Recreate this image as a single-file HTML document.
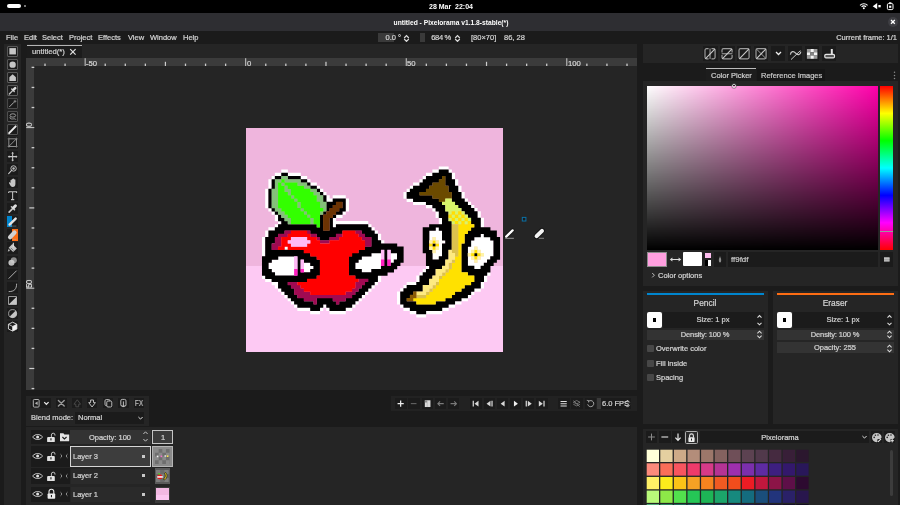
<!DOCTYPE html>
<html><head><meta charset="utf-8"><title>Pixelorama</title><style>
html,body{margin:0;padding:0}
body{width:900px;height:505px;overflow:hidden;background:#1b1b1b;position:relative;font-family:"Liberation Sans",sans-serif}
.b{position:absolute;display:block}
.t{position:absolute;white-space:nowrap;font-family:"Liberation Sans",sans-serif;will-change:transform;-webkit-text-stroke:0.22px}
.art{display:block}
</style></head><body>
<div class="b " style="left:0px;top:0px;width:900px;height:13.3px;background:#000;"></div>
<div class="b " style="left:0px;top:13.2px;width:900px;height:17.4px;background:#2e2e32;"></div>
<div class="b " style="left:0px;top:30.6px;width:900px;height:13.4px;background:#1b1b1b;"></div>
<div class="b " style="left:6.9px;top:4.2px;width:14px;height:3.6px;background:#fff;border-radius:2px"></div>
<div class="b " style="left:23.6px;top:5px;width:2px;height:2px;background:#9a9a9a;border-radius:1px"></div>
<div class="t" style="top:1.9px;font-size:7px;line-height:9.8px;color:#fff;font-weight:bold;-webkit-text-stroke:0;left:300.9px;width:300px;text-align:center;">28 Mar&nbsp;&nbsp;22:04</div>
<div class="t" style="top:17.91px;font-size:6.7px;line-height:9.38px;color:#fff;font-weight:bold;-webkit-text-stroke:0;left:300.6px;width:300px;text-align:center;">untitled - Pixelorama v1.1.8-stable(*)</div>
<svg class="b" style="left:856px;top:0px;" width="44" height="13" viewBox="0 0 44 13"><g fill="none" stroke="#fff" stroke-width="1.150"><path d="M4.050 5.300A5.300 5.300 0 0111.550 5.300M5.600 6.850A3.100 3.100 0 0110 6.850"/></g><circle cx="7.800" cy="8.300" r="1" fill="#fff"/><path d="M16.700 6.150L21.200 3v6.300z" fill="#fff"/><rect x="22.400" y="5" width="2.300" height="2.300" fill="#fff"/><rect x="31.400" y="3.600" width="5.600" height="6" rx="1.100" fill="none" stroke="#fff" stroke-width="1"/><rect x="33" y="2.300" width="2.400" height="1.300" fill="#fff"/><rect x="33.100" y="5.700" width="2.200" height="2.100" fill="#fff"/></svg>
<div class="b " style="left:888.1px;top:17.1px;width:9.8px;height:9.8px;background:#3e3e43;border-radius:50%"></div>
<svg class="b" style="left:888.1px;top:17.1px;" width="9.8" height="9.8" viewBox="0 0 9.8 9.8"><path d="M3 3l3.800 3.800M6.800 3L3 6.800" stroke="#fff" stroke-width="1.300" fill="none"/></svg>
<div class="t" style="top:33.15px;font-size:7.5px;line-height:10.5px;color:#d2d2d2;left:5.7px;">File</div>
<div class="t" style="top:33.15px;font-size:7.5px;line-height:10.5px;color:#d2d2d2;left:23.6px;">Edit</div>
<div class="t" style="top:33.15px;font-size:7.5px;line-height:10.5px;color:#d2d2d2;left:42.1px;">Select</div>
<div class="t" style="top:33.15px;font-size:7.5px;line-height:10.5px;color:#d2d2d2;left:68.7px;">Project</div>
<div class="t" style="top:33.15px;font-size:7.5px;line-height:10.5px;color:#d2d2d2;left:98.2px;">Effects</div>
<div class="t" style="top:33.15px;font-size:7.5px;line-height:10.5px;color:#d2d2d2;left:127.6px;">View</div>
<div class="t" style="top:33.15px;font-size:7.5px;line-height:10.5px;color:#d2d2d2;left:149.8px;">Window</div>
<div class="t" style="top:33.15px;font-size:7.5px;line-height:10.5px;color:#d2d2d2;left:182.5px;">Help</div>
<div class="b " style="left:377.5px;top:33px;width:16.5px;height:9.2px;background:#3a3a3a;"></div>
<div class="t" style="top:33.15px;font-size:7.5px;line-height:10.5px;color:#d2d2d2;left:100.8px;width:300px;text-align:right;">0.0 °</div>
<svg class="b" style="left:402.5px;top:33.5px;" width="7" height="8.5" viewBox="0 0 7 8.5"><path d="M1.200 4L3.500 1.600 5.800 4M1.200 5L3.500 7.400 5.800 5" fill="none" stroke="#dedede" stroke-width="1.150"/></svg>
<div class="b " style="left:419.8px;top:33px;width:5.2px;height:9.2px;background:#3a3a3a;"></div>
<div class="t" style="top:33.15px;font-size:7.5px;line-height:10.5px;color:#d2d2d2;left:150.6px;width:300px;text-align:right;letter-spacing:-0.3px;">684 %</div>
<svg class="b" style="left:454px;top:33.5px;" width="7" height="8.5" viewBox="0 0 7 8.5"><path d="M1.200 4L3.500 1.600 5.800 4M1.200 5L3.500 7.400 5.800 5" fill="none" stroke="#dedede" stroke-width="1.150"/></svg>
<div class="t" style="top:33.15px;font-size:7.5px;line-height:10.5px;color:#d2d2d2;left:471.2px;">[80×70]</div>
<div class="t" style="top:33.15px;font-size:7.5px;line-height:10.5px;color:#d2d2d2;left:503.6px;">86, 28</div>
<div class="t" style="top:33.15px;font-size:7.5px;line-height:10.5px;color:#d2d2d2;left:597.2px;width:300px;text-align:right;">Current frame: 1/1</div>
<div class="b " style="left:4.4px;top:44px;width:16.8px;height:461px;background:#252525;"></div>
<div class="b " style="left:6.7px;top:45.6px;width:11.25px;height:11.25px;background:#1b1b1b;"></div>
<svg class="b" style="left:6.7px;top:45.6px;" width="11.25" height="11.25" viewBox="0 0 24 24"><rect x="1.6" y="1.6" width="20.8" height="20.8" fill="none" stroke="#8c8c8c" stroke-width="1.250"/><rect x="5" y="4.5" width="14" height="13.5" fill="#c6c6c6"/></svg>
<div class="b " style="left:6.7px;top:58.725px;width:11.25px;height:11.25px;background:#1b1b1b;"></div>
<svg class="b" style="left:6.7px;top:58.725px;" width="11.25" height="11.25" viewBox="0 0 24 24"><rect x="1.6" y="1.6" width="20.8" height="20.8" fill="none" stroke="#8c8c8c" stroke-width="1.250"/><circle cx="12" cy="12" r="6.8" fill="#c6c6c6"/></svg>
<div class="b " style="left:6.7px;top:71.85px;width:11.25px;height:11.25px;background:#1b1b1b;"></div>
<svg class="b" style="left:6.7px;top:71.85px;" width="11.25" height="11.25" viewBox="0 0 24 24"><rect x="1.6" y="1.6" width="20.8" height="20.8" fill="none" stroke="#8c8c8c" stroke-width="1.250"/><path d="M12 5L19 11V19H5V11Z" fill="#c6c6c6"/></svg>
<div class="b " style="left:6.7px;top:84.975px;width:11.25px;height:11.25px;background:#1b1b1b;"></div>
<svg class="b" style="left:6.7px;top:84.975px;" width="11.25" height="11.25" viewBox="0 0 24 24"><rect x="1.6" y="1.6" width="20.8" height="20.8" fill="none" stroke="#8c8c8c" stroke-width="1.250"/><path d="M5 19L12 12" stroke="#c6c6c6" stroke-width="3" stroke-linecap="round" fill="none"/><path d="M10 8.500l5.500 5.500" stroke="#c6c6c6" stroke-width="3" stroke-linecap="round" fill="none"/><path d="M14 10L17.500 6.500" stroke="#dedede" stroke-width="5.400" stroke-linecap="round"/></svg>
<div class="b " style="left:6.7px;top:98.1px;width:11.25px;height:11.25px;background:#1b1b1b;"></div>
<svg class="b" style="left:6.7px;top:98.1px;" width="11.25" height="11.25" viewBox="0 0 24 24"><rect x="1.6" y="1.6" width="20.8" height="20.8" fill="none" stroke="#6f6f6f" stroke-width="1.250"/><path d="M5 19L15 9" stroke="#b5b5b5" stroke-width="2" fill="none"/><path d="M17 4v6M14 7h6" stroke="#b5b5b5" stroke-width="1.4"/></svg>
<div class="b " style="left:6.7px;top:111.225px;width:11.25px;height:11.25px;background:#1b1b1b;"></div>
<svg class="b" style="left:6.7px;top:111.225px;" width="11.25" height="11.25" viewBox="0 0 24 24"><rect x="1.6" y="1.6" width="20.8" height="20.8" fill="none" stroke="#7c7c7c" stroke-width="1.250"/><ellipse cx="12.5" cy="9.5" rx="6" ry="3.6" fill="none" stroke="#bdbdbd" stroke-width="1.6"/><path d="M7 12.5c-2 3 1 5 5 4.5s6-0.5 7 1.5" fill="none" stroke="#bdbdbd" stroke-width="1.6"/></svg>
<div class="b " style="left:6.7px;top:124.35px;width:11.25px;height:11.25px;background:#1b1b1b;"></div>
<svg class="b" style="left:6.7px;top:124.35px;" width="11.25" height="11.25" viewBox="0 0 24 24"><rect x="1.6" y="1.6" width="20.8" height="20.8" fill="none" stroke="#7c7c7c" stroke-width="1.250"/><path d="M4.5 19.5L18.5 5" stroke="#ececec" stroke-width="4.2" stroke-linecap="round" fill="none"/></svg>
<div class="b " style="left:6.7px;top:137.475px;width:11.25px;height:11.25px;background:#1b1b1b;"></div>
<svg class="b" style="left:6.7px;top:137.475px;" width="11.25" height="11.25" viewBox="0 0 24 24"><rect x="4" y="4" width="16" height="16" fill="none" stroke="#bdbdbd" stroke-width="1.5"/><path d="M4 20L20 4" stroke="#bdbdbd" stroke-width="1.5"/><path d="M4 1v3M1 4h3M20 1v3M23 4h-3M4 23v-3M1 20h3M20 23v-3M23 20h-3" stroke="#9a9a9a" stroke-width="1.2"/></svg>
<div class="b " style="left:6.7px;top:150.6px;width:11.25px;height:11.25px;background:#1b1b1b;"></div>
<svg class="b" style="left:6.7px;top:150.6px;" width="11.25" height="11.25" viewBox="0 0 24 24"><path d="M12 4v16M4 12h16" stroke="#c6c6c6" stroke-width="2.2"/><path d="M12 1.5l3 3.6h-6zM12 22.5l3-3.6h-6zM1.5 12l3.6-3v6zM22.5 12l-3.6-3v6z" fill="#c6c6c6"/></svg>
<div class="b " style="left:6.7px;top:163.725px;width:11.25px;height:11.25px;background:#1b1b1b;"></div>
<svg class="b" style="left:6.7px;top:163.725px;" width="11.25" height="11.25" viewBox="0 0 24 24"><circle cx="14" cy="9.5" r="5.8" fill="none" stroke="#c6c6c6" stroke-width="2"/><circle cx="14" cy="9.5" r="2.6" fill="#bdbdbd"/><path d="M9.8 13.8L3.5 20.5" stroke="#c6c6c6" stroke-width="2.4" stroke-linecap="round"/></svg>
<div class="b " style="left:6.7px;top:176.85px;width:11.25px;height:11.25px;background:#1b1b1b;"></div>
<svg class="b" style="left:6.7px;top:176.85px;" width="11.25" height="11.25" viewBox="0 0 24 24"><path d="M7.5 13V7.2a1.3 1.3 0 012.6 0V5.2a1.3 1.3 0 012.6 0V4.6a1.3 1.3 0 012.6 0V6a1.3 1.3 0 012.6 0V15c0 4-2 6.5-5.6 6.5-3.4 0-4.6-2-6.3-5.4L4.2 13a1.4 1.4 0 012.3-1.4z" fill="#c6c6c6"/></svg>
<div class="b " style="left:6.7px;top:189.975px;width:11.25px;height:11.25px;background:#1b1b1b;"></div>
<svg class="b" style="left:6.7px;top:189.975px;" width="11.25" height="11.25" viewBox="0 0 24 24"><path d="M3.5 3.5h17v3M3.5 3.5v3M12 3.5v17M8.5 20.5h7" stroke="#c6c6c6" stroke-width="2.2" fill="none"/></svg>
<div class="b " style="left:6.7px;top:203.1px;width:11.25px;height:11.25px;background:#1b1b1b;"></div>
<svg class="b" style="left:6.7px;top:203.1px;" width="11.25" height="11.25" viewBox="0 0 24 24"><path d="M4.5 19.5L12 12" stroke="#c6c6c6" stroke-width="3.6" stroke-linecap="round" fill="none"/><path d="M9.5 8l6.500 6.500" stroke="#c6c6c6" stroke-width="3.400" stroke-linecap="round"/><path d="M14 10L18 6" stroke="#dedede" stroke-width="6.400" stroke-linecap="round"/></svg>
<div class="b " style="left:6.7px;top:216.225px;width:11.25px;height:11.25px;background:#1b1b1b;"></div>
<div class="b " style="left:6.7px;top:216.225px;width:5.6px;height:11.25px;background:#0086cf;"></div>
<svg class="b" style="left:6.7px;top:216.225px;" width="11.25" height="11.25" viewBox="0 0 24 24"><path d="M5.5 18.5L18.500 5.500" stroke="#e4e4e4" stroke-width="5.200" stroke-linecap="round" fill="none"/><path d="M4 21.500h16" stroke="#7a98ac" stroke-width="1.200"/></svg>
<div class="b " style="left:6.7px;top:229.35px;width:11.25px;height:11.25px;background:#1b1b1b;"></div>
<div class="b " style="left:12.35px;top:229.35px;width:5.6px;height:11.25px;background:#fd6d14;"></div>
<svg class="b" style="left:6.7px;top:229.35px;" width="11.25" height="11.25" viewBox="0 0 24 24"><path d="M6.500 17.500L16 7.500" stroke="#d2d2d2" stroke-width="9" stroke-linecap="round" fill="none"/><path d="M12 22h8" stroke="#c9a78c" stroke-width="1.200"/></svg>
<div class="b " style="left:6.7px;top:242.475px;width:11.25px;height:11.25px;background:#1b1b1b;"></div>
<svg class="b" style="left:6.7px;top:242.475px;" width="11.25" height="11.25" viewBox="0 0 24 24"><path d="M11.500 4.500l9.500 9.500-8 7.500L3.500 12.500z" fill="#c6c6c6"/><path d="M13.500 1.500v9" stroke="#e0e0e0" stroke-width="2.200"/><path d="M4 14l-2.500 6 4.500-1z" fill="#c6c6c6"/><path d="M8 12.500l6 6" stroke="#1b1b1b" stroke-width="1"/></svg>
<div class="b " style="left:6.7px;top:255.6px;width:11.25px;height:11.25px;background:#1b1b1b;"></div>
<svg class="b" style="left:6.7px;top:255.6px;" width="11.25" height="11.25" viewBox="0 0 24 24"><circle cx="14.5" cy="9" r="6.5" fill="#8d8d8d"/><circle cx="9.5" cy="14.5" r="6.5" fill="#cfcfcf" fill-opacity=".9"/></svg>
<div class="b " style="left:6.7px;top:268.725px;width:11.25px;height:11.25px;background:#1b1b1b;"></div>
<svg class="b" style="left:6.7px;top:268.725px;" width="11.25" height="11.25" viewBox="0 0 24 24"><path d="M3.5 20.5L20.5 3.5" stroke="#c6c6c6" stroke-width="1.8"/></svg>
<div class="b " style="left:6.7px;top:281.85px;width:11.25px;height:11.25px;background:#1b1b1b;"></div>
<svg class="b" style="left:6.7px;top:281.85px;" width="11.25" height="11.25" viewBox="0 0 24 24"><path d="M3.5 20.5C16 20.5 20.5 15 20.5 3.5" stroke="#c6c6c6" stroke-width="1.8" fill="none"/></svg>
<div class="b " style="left:6.7px;top:294.975px;width:11.25px;height:11.25px;background:#1b1b1b;"></div>
<svg class="b" style="left:6.7px;top:294.975px;" width="11.25" height="11.25" viewBox="0 0 24 24"><rect x="3.5" y="3.5" width="17" height="17" fill="none" stroke="#c6c6c6" stroke-width="1.6"/><path d="M20.5 3.5v17h-17z" fill="#c6c6c6"/></svg>
<div class="b " style="left:6.7px;top:308.1px;width:11.25px;height:11.25px;background:#1b1b1b;"></div>
<svg class="b" style="left:6.7px;top:308.1px;" width="11.25" height="11.25" viewBox="0 0 24 24"><circle cx="12" cy="12" r="8.6" fill="none" stroke="#c6c6c6" stroke-width="1.6"/><path d="M18.1 5.9A8.6 8.6 0 015.9 18.1z" fill="#c6c6c6"/></svg>
<div class="b " style="left:6.7px;top:321.225px;width:11.25px;height:11.25px;background:#1b1b1b;"></div>
<svg class="b" style="left:6.7px;top:321.225px;" width="11.25" height="11.25" viewBox="0 0 24 24"><path d="M12 2.5l9 4.5v10l-9 4.5-9-4.5v-10z" fill="none" stroke="#f0f0f0" stroke-width="1.8"/><path d="M3 7l9 4.5 9-4.5M12 11.5v10" stroke="#f0f0f0" stroke-width="1.6" fill="none"/><path d="M12 11.5l9-4.5v10l-9 4.5z" fill="#f0f0f0"/></svg>
<div class="b " style="left:26.6px;top:44px;width:610.6px;height:346px;background:#252525;"></div>
<div class="b " style="left:27px;top:44.6px;width:55.2px;height:13.6px;background:#1c1c1c;"></div>
<div class="b " style="left:27px;top:45px;width:55.2px;height:1px;background:#b4b4b4;"></div>
<div class="t" style="top:46.91px;font-size:7.7px;line-height:10.78px;color:#cfcfcf;left:31.6px;">untitled(*)</div>
<svg class="b" style="left:68.9px;top:47.7px;" width="8" height="8" viewBox="0 0 8 8"><path d="M1.2 1.2l5.4 5.4M6.6 1.2l-5.4 5.4" stroke="#e0e0e0" stroke-width="1.2" fill="none"/></svg>
<div class="b " style="left:26.2px;top:58.2px;width:611px;height:7.8px;background:#3b3b3b;"></div>
<div class="b " style="left:26.2px;top:58.2px;width:8.1px;height:331.8px;background:#3b3b3b;"></div>
<svg class="b" style="left:0px;top:0px;pointer-events:none" width="900" height="505" viewBox="0 0 900 505"><rect x="44.36" y="63.60" width="1.3" height="2.4" fill="#cdcdcd"/><rect x="64.43" y="63.60" width="1.3" height="2.4" fill="#cdcdcd"/><rect x="84.65" y="58.20" width="1.0" height="7.8" fill="#cdcdcd"/><rect x="104.57" y="63.60" width="1.3" height="2.4" fill="#cdcdcd"/><rect x="124.64" y="63.60" width="1.3" height="2.4" fill="#cdcdcd"/><rect x="144.71" y="63.60" width="1.3" height="2.4" fill="#cdcdcd"/><rect x="164.82" y="61.80" width="1.2" height="4.2" fill="#cdcdcd"/><rect x="184.84" y="63.60" width="1.3" height="2.4" fill="#cdcdcd"/><rect x="204.91" y="63.60" width="1.3" height="2.4" fill="#cdcdcd"/><rect x="224.98" y="63.60" width="1.3" height="2.4" fill="#cdcdcd"/><rect x="245.20" y="58.20" width="1.0" height="7.8" fill="#cdcdcd"/><rect x="265.12" y="63.60" width="1.3" height="2.4" fill="#cdcdcd"/><rect x="285.19" y="63.60" width="1.3" height="2.4" fill="#cdcdcd"/><rect x="305.26" y="63.60" width="1.3" height="2.4" fill="#cdcdcd"/><rect x="325.38" y="61.80" width="1.2" height="4.2" fill="#cdcdcd"/><rect x="345.39" y="63.60" width="1.3" height="2.4" fill="#cdcdcd"/><rect x="365.46" y="63.60" width="1.3" height="2.4" fill="#cdcdcd"/><rect x="385.53" y="63.60" width="1.3" height="2.4" fill="#cdcdcd"/><rect x="405.75" y="58.20" width="1.0" height="7.8" fill="#cdcdcd"/><rect x="425.67" y="63.60" width="1.3" height="2.4" fill="#cdcdcd"/><rect x="445.74" y="63.60" width="1.3" height="2.4" fill="#cdcdcd"/><rect x="465.81" y="63.60" width="1.3" height="2.4" fill="#cdcdcd"/><rect x="485.92" y="61.80" width="1.2" height="4.2" fill="#cdcdcd"/><rect x="505.94" y="63.60" width="1.3" height="2.4" fill="#cdcdcd"/><rect x="526.01" y="63.60" width="1.3" height="2.4" fill="#cdcdcd"/><rect x="546.08" y="63.60" width="1.3" height="2.4" fill="#cdcdcd"/><rect x="566.30" y="58.20" width="1.0" height="7.8" fill="#cdcdcd"/><rect x="586.22" y="63.60" width="1.3" height="2.4" fill="#cdcdcd"/><rect x="606.29" y="63.60" width="1.3" height="2.4" fill="#cdcdcd"/><rect x="626.36" y="63.60" width="1.3" height="2.4" fill="#cdcdcd"/><rect x="31.60" y="66.72" width="2.7" height="1.3" fill="#cdcdcd"/><rect x="31.60" y="86.80" width="2.7" height="1.3" fill="#cdcdcd"/><rect x="31.60" y="106.87" width="2.7" height="1.3" fill="#cdcdcd"/><rect x="26.20" y="127.10" width="8.1" height="1.0" fill="#cdcdcd"/><rect x="31.60" y="147.02" width="2.7" height="1.3" fill="#cdcdcd"/><rect x="31.60" y="167.10" width="2.7" height="1.3" fill="#cdcdcd"/><rect x="31.60" y="187.17" width="2.7" height="1.3" fill="#cdcdcd"/><rect x="29.30" y="207.30" width="5" height="1.2" fill="#cdcdcd"/><rect x="31.60" y="227.32" width="2.7" height="1.3" fill="#cdcdcd"/><rect x="31.60" y="247.40" width="2.7" height="1.3" fill="#cdcdcd"/><rect x="31.60" y="267.48" width="2.7" height="1.3" fill="#cdcdcd"/><rect x="26.20" y="287.70" width="8.1" height="1.0" fill="#cdcdcd"/><rect x="31.60" y="307.62" width="2.7" height="1.3" fill="#cdcdcd"/><rect x="31.60" y="327.70" width="2.7" height="1.3" fill="#cdcdcd"/><rect x="31.60" y="347.77" width="2.7" height="1.3" fill="#cdcdcd"/><rect x="29.30" y="367.90" width="5" height="1.2" fill="#cdcdcd"/><rect x="31.60" y="387.92" width="2.7" height="1.3" fill="#cdcdcd"/></svg>
<div class="t" style="top:58.61px;font-size:7.7px;line-height:10.78px;color:#d4d4d4;left:86.25px;">-50</div>
<div class="t" style="top:58.61px;font-size:7.7px;line-height:10.78px;color:#d4d4d4;left:246.8px;">0</div>
<div class="t" style="top:58.61px;font-size:7.7px;line-height:10.78px;color:#d4d4d4;left:407.35px;">50</div>
<div class="t" style="top:58.61px;font-size:7.7px;line-height:10.78px;color:#d4d4d4;left:567.9px;">100</div>
<div class="t" style="left:26.4px;top:126.9px;letter-spacing:-0.8px;font-size:8.2px;line-height:8.4px;color:#d4d4d4;transform-origin:0 0;transform:rotate(-90deg)">0</div>
<div class="t" style="left:26.4px;top:287.5px;letter-spacing:-0.8px;font-size:8.2px;line-height:8.4px;color:#d4d4d4;transform-origin:0 0;transform:rotate(-90deg)">50</div>
<svg class="art" style="position:absolute;left:245.9px;top:127.7px" width="257.2" height="224.6" viewBox="0 0 80 70" preserveAspectRatio="none">
<rect width="80" height="70" fill="#fdc9f3"/>
<rect width="80" height="43" fill="#efb5dd"/>
<path fill="#ffffff" d="M59.97 11.97h3.06v1.06h-3.06zM10.97 12.97h2.06v1.06h-2.06zM57.97 12.97h2.06v1.06h-2.06zM62.97 12.97h1.06v1.06h-1.06zM8.97 13.97h2.06v1.06h-2.06zM12.97 13.97h4.06v1.06h-4.06zM55.97 13.97h2.06v1.06h-2.06zM63.97 13.97h1.06v1.06h-1.06zM7.97 14.97h1.06v1.06h-1.06zM16.97 14.97h2.06v1.06h-2.06zM54.97 14.97h1.06v1.06h-1.06zM63.97 14.97h1.06v1.06h-1.06zM6.97 15.97h1.06v1.06h-1.06zM18.97 15.97h1.06v1.06h-1.06zM53.97 15.97h1.06v1.06h-1.06zM64.97 15.97h1.06v1.06h-1.06zM6.97 16.97h1.06v1.06h-1.06zM19.97 16.97h2.06v1.06h-2.06zM51.97 16.97h2.06v1.06h-2.06zM64.97 16.97h1.06v1.06h-1.06zM6.97 17.97h1.06v1.06h-1.06zM21.97 17.97h1.06v1.06h-1.06zM50.97 17.97h1.06v1.06h-1.06zM65.97 17.97h1.06v1.06h-1.06zM5.97 18.97h1.06v1.06h-1.06zM22.97 18.97h1.06v1.06h-1.06zM49.97 18.97h1.06v1.06h-1.06zM65.97 18.97h1.06v1.06h-1.06zM5.97 19.97h1.06v1.06h-1.06zM23.97 19.97h1.06v1.06h-1.06zM48.97 19.97h1.06v1.06h-1.06zM66.97 19.97h1.06v1.06h-1.06zM5.97 20.97h1.06v1.06h-1.06zM24.97 20.97h1.06v1.06h-1.06zM26.97 20.97h4.06v1.06h-4.06zM48.97 20.97h1.06v1.06h-1.06zM66.97 20.97h1.06v1.06h-1.06zM5.97 21.97h1.06v1.06h-1.06zM24.97 21.97h2.06v1.06h-2.06zM30.97 21.97h1.06v1.06h-1.06zM49.97 21.97h2.06v1.06h-2.06zM67.97 21.97h1.06v1.06h-1.06zM5.97 22.97h1.06v1.06h-1.06zM30.97 22.97h1.06v1.06h-1.06zM51.97 22.97h4.06v1.06h-4.06zM68.97 22.97h1.06v1.06h-1.06zM5.97 23.97h1.06v1.06h-1.06zM30.97 23.97h1.06v1.06h-1.06zM55.97 23.97h2.06v1.06h-2.06zM69.97 23.97h1.06v1.06h-1.06zM6.97 24.97h1.06v1.06h-1.06zM30.97 24.97h1.06v1.06h-1.06zM57.97 24.97h1.06v1.06h-1.06zM70.97 24.97h1.06v1.06h-1.06zM7.97 25.97h1.06v1.06h-1.06zM29.97 25.97h1.06v1.06h-1.06zM58.97 25.97h1.06v1.06h-1.06zM71.97 25.97h1.06v1.06h-1.06zM8.97 26.97h1.06v1.06h-1.06zM27.97 26.97h2.06v1.06h-2.06zM58.97 26.97h1.06v1.06h-1.06zM71.97 26.97h1.06v1.06h-1.06zM8.97 27.97h1.06v1.06h-1.06zM26.97 27.97h1.06v1.06h-1.06zM59.97 27.97h1.06v1.06h-1.06zM72.97 27.97h1.06v1.06h-1.06zM9.97 28.97h1.06v1.06h-1.06zM26.97 28.97h11.06v1.06h-11.06zM59.97 28.97h1.06v1.06h-1.06zM72.97 28.97h1.06v1.06h-1.06zM8.97 29.97h1.06v1.06h-1.06zM26.97 29.97h1.06v1.06h-1.06zM37.97 29.97h1.06v1.06h-1.06zM72.97 29.97h1.06v1.06h-1.06zM6.97 30.97h2.06v1.06h-2.06zM38.97 30.97h1.06v1.06h-1.06zM58.97 30.97h1.06v1.06h-1.06zM5.97 31.97h1.06v1.06h-1.06zM39.97 31.97h1.06v1.06h-1.06zM56.97 31.97h4.06v1.06h-4.06zM5.97 32.97h1.06v1.06h-1.06zM40.97 32.97h1.06v1.06h-1.06zM56.97 32.97h4.06v1.06h-4.06zM72.97 32.97h1.06v1.06h-1.06zM4.97 33.97h1.06v1.06h-1.06zM40.97 33.97h1.06v1.06h-1.06zM56.97 33.97h1.06v1.06h-1.06zM58.97 33.97h2.06v1.06h-2.06zM70.97 33.97h5.06v1.06h-5.06zM4.97 34.97h1.06v1.06h-1.06zM41.97 34.97h1.06v1.06h-1.06zM59.97 34.97h2.06v1.06h-2.06zM69.97 34.97h7.06v1.06h-7.06zM4.97 35.97h1.06v1.06h-1.06zM59.97 35.97h1.06v1.06h-1.06zM69.97 35.97h7.06v1.06h-7.06zM4.97 36.97h1.06v1.06h-1.06zM11.97 36.97h1.06v1.06h-1.06zM59.97 36.97h1.06v1.06h-1.06zM68.97 36.97h2.06v1.06h-2.06zM71.97 36.97h5.06v1.06h-5.06zM4.97 37.97h1.06v1.06h-1.06zM58.97 37.97h2.06v1.06h-2.06zM68.97 37.97h1.06v1.06h-1.06zM72.97 37.97h4.06v1.06h-4.06zM4.97 38.97h1.06v1.06h-1.06zM38.97 38.97h3.06v1.06h-3.06zM44.97 38.97h2.06v1.06h-2.06zM57.97 38.97h3.06v1.06h-3.06zM73.97 38.97h3.06v1.06h-3.06zM9.97 39.97h5.06v1.06h-5.06zM35.97 39.97h6.06v1.06h-6.06zM44.97 39.97h2.06v1.06h-2.06zM57.97 39.97h2.06v1.06h-2.06zM68.97 39.97h1.06v1.06h-1.06zM72.97 39.97h3.06v1.06h-3.06zM7.97 40.97h7.06v1.06h-7.06zM34.97 40.97h7.06v1.06h-7.06zM44.97 40.97h1.06v1.06h-1.06zM68.97 40.97h2.06v1.06h-2.06zM71.97 40.97h3.06v1.06h-3.06zM6.97 41.97h8.06v1.06h-8.06zM17.97 41.97h2.06v1.06h-2.06zM33.97 41.97h8.06v1.06h-8.06zM68.97 41.97h5.06v1.06h-5.06zM6.97 42.97h8.06v1.06h-8.06zM17.97 42.97h3.06v1.06h-3.06zM33.97 42.97h8.06v1.06h-8.06zM55.97 42.97h1.06v1.06h-1.06zM70.97 42.97h2.06v1.06h-2.06zM7.97 43.97h7.06v1.06h-7.06zM17.97 43.97h2.06v1.06h-2.06zM35.97 43.97h3.06v1.06h-3.06zM54.97 43.97h1.06v1.06h-1.06zM8.97 44.97h6.06v1.06h-6.06zM53.97 44.97h1.06v1.06h-1.06zM74.97 44.97h1.06v1.06h-1.06zM4.97 45.97h1.06v1.06h-1.06zM40.97 45.97h1.06v1.06h-1.06zM52.97 45.97h1.06v1.06h-1.06zM73.97 45.97h1.06v1.06h-1.06zM5.97 46.97h2.06v1.06h-2.06zM40.97 46.97h1.06v1.06h-1.06zM52.97 46.97h1.06v1.06h-1.06zM73.97 46.97h1.06v1.06h-1.06zM7.97 47.97h2.06v1.06h-2.06zM39.97 47.97h1.06v1.06h-1.06zM49.97 47.97h3.06v1.06h-3.06zM72.97 47.97h1.06v1.06h-1.06zM8.97 48.97h1.06v1.06h-1.06zM38.97 48.97h1.06v1.06h-1.06zM48.97 48.97h1.06v1.06h-1.06zM72.97 48.97h1.06v1.06h-1.06zM9.97 49.97h1.06v1.06h-1.06zM37.97 49.97h1.06v1.06h-1.06zM47.97 49.97h1.06v1.06h-1.06zM70.97 49.97h2.06v1.06h-2.06zM10.97 50.97h1.06v1.06h-1.06zM36.97 50.97h1.06v1.06h-1.06zM46.97 50.97h1.06v1.06h-1.06zM69.97 50.97h1.06v1.06h-1.06zM11.97 51.97h1.06v1.06h-1.06zM35.97 51.97h1.06v1.06h-1.06zM46.97 51.97h1.06v1.06h-1.06zM68.97 51.97h1.06v1.06h-1.06zM12.97 52.97h1.06v1.06h-1.06zM34.97 52.97h1.06v1.06h-1.06zM46.97 52.97h1.06v1.06h-1.06zM66.97 52.97h2.06v1.06h-2.06zM13.97 53.97h1.06v1.06h-1.06zM33.97 53.97h1.06v1.06h-1.06zM46.97 53.97h1.06v1.06h-1.06zM64.97 53.97h2.06v1.06h-2.06zM14.97 54.97h1.06v1.06h-1.06zM23.97 54.97h1.06v1.06h-1.06zM32.97 54.97h1.06v1.06h-1.06zM47.97 54.97h1.06v1.06h-1.06zM62.97 54.97h2.06v1.06h-2.06zM15.97 55.97h4.06v1.06h-4.06zM22.97 55.97h1.06v1.06h-1.06zM24.97 55.97h1.06v1.06h-1.06zM30.97 55.97h2.06v1.06h-2.06zM48.97 55.97h2.06v1.06h-2.06zM60.97 55.97h2.06v1.06h-2.06zM19.97 56.97h3.06v1.06h-3.06zM25.97 56.97h5.06v1.06h-5.06zM50.97 56.97h2.06v1.06h-2.06zM55.97 56.97h5.06v1.06h-5.06zM52.97 57.97h3.06v1.06h-3.06z"/>
<path fill="#000000" d="M59.97 12.97h3.06v1.06h-3.06zM10.97 13.97h2.06v1.06h-2.06zM57.97 13.97h6.06v1.06h-6.06zM8.97 14.97h2.06v1.06h-2.06zM12.97 14.97h4.06v1.06h-4.06zM55.97 14.97h5.06v1.06h-5.06zM61.97 14.97h2.06v1.06h-2.06zM7.97 15.97h1.06v1.06h-1.06zM16.97 15.97h2.06v1.06h-2.06zM54.97 15.97h5.06v1.06h-5.06zM61.97 15.97h3.06v1.06h-3.06zM7.97 16.97h1.06v1.06h-1.06zM18.97 16.97h1.06v1.06h-1.06zM53.97 16.97h4.06v1.06h-4.06zM61.97 16.97h3.06v1.06h-3.06zM7.97 17.97h1.06v1.06h-1.06zM19.97 17.97h2.06v1.06h-2.06zM51.97 17.97h5.06v1.06h-5.06zM62.97 17.97h3.06v1.06h-3.06zM6.97 18.97h1.06v1.06h-1.06zM21.97 18.97h1.06v1.06h-1.06zM50.97 18.97h5.06v1.06h-5.06zM62.97 18.97h3.06v1.06h-3.06zM6.97 19.97h1.06v1.06h-1.06zM22.97 19.97h1.06v1.06h-1.06zM49.97 19.97h4.06v1.06h-4.06zM63.97 19.97h3.06v1.06h-3.06zM6.97 20.97h1.06v1.06h-1.06zM23.97 20.97h1.06v1.06h-1.06zM49.97 20.97h8.06v1.06h-8.06zM63.97 20.97h3.06v1.06h-3.06zM6.97 21.97h1.06v1.06h-1.06zM23.97 21.97h1.06v1.06h-1.06zM26.97 21.97h4.06v1.06h-4.06zM51.97 21.97h8.06v1.06h-8.06zM63.97 21.97h4.06v1.06h-4.06zM6.97 22.97h1.06v1.06h-1.06zM24.97 22.97h3.06v1.06h-3.06zM29.97 22.97h1.06v1.06h-1.06zM55.97 22.97h5.06v1.06h-5.06zM64.97 22.97h4.06v1.06h-4.06zM6.97 23.97h1.06v1.06h-1.06zM24.97 23.97h2.06v1.06h-2.06zM29.97 23.97h1.06v1.06h-1.06zM57.97 23.97h4.06v1.06h-4.06zM65.97 23.97h4.06v1.06h-4.06zM7.97 24.97h1.06v1.06h-1.06zM24.97 24.97h1.06v1.06h-1.06zM28.97 24.97h2.06v1.06h-2.06zM58.97 24.97h3.06v1.06h-3.06zM66.97 24.97h4.06v1.06h-4.06zM8.97 25.97h1.06v1.06h-1.06zM23.97 25.97h1.06v1.06h-1.06zM27.97 25.97h2.06v1.06h-2.06zM59.97 25.97h3.06v1.06h-3.06zM67.97 25.97h4.06v1.06h-4.06zM9.97 26.97h1.06v1.06h-1.06zM22.97 26.97h1.06v1.06h-1.06zM26.97 26.97h1.06v1.06h-1.06zM59.97 26.97h3.06v1.06h-3.06zM68.97 26.97h3.06v1.06h-3.06zM9.97 27.97h2.06v1.06h-2.06zM22.97 27.97h1.06v1.06h-1.06zM25.97 27.97h1.06v1.06h-1.06zM60.97 27.97h2.06v1.06h-2.06zM69.97 27.97h3.06v1.06h-3.06zM10.97 28.97h2.06v1.06h-2.06zM22.97 28.97h1.06v1.06h-1.06zM25.97 28.97h1.06v1.06h-1.06zM60.97 28.97h3.06v1.06h-3.06zM69.97 28.97h3.06v1.06h-3.06zM9.97 29.97h12.06v1.06h-12.06zM22.97 29.97h1.06v1.06h-1.06zM25.97 29.97h1.06v1.06h-1.06zM27.97 29.97h10.06v1.06h-10.06zM56.97 29.97h7.06v1.06h-7.06zM70.97 29.97h2.06v1.06h-2.06zM8.97 30.97h15.06v1.06h-15.06zM25.97 30.97h13.06v1.06h-13.06zM54.97 30.97h4.06v1.06h-4.06zM59.97 30.97h4.06v1.06h-4.06zM69.97 30.97h6.06v1.06h-6.06zM6.97 31.97h5.06v1.06h-5.06zM19.97 31.97h10.06v1.06h-10.06zM35.97 31.97h4.06v1.06h-4.06zM54.97 31.97h2.06v1.06h-2.06zM60.97 31.97h3.06v1.06h-3.06zM68.97 31.97h9.06v1.06h-9.06zM6.97 32.97h3.06v1.06h-3.06zM21.97 32.97h6.06v1.06h-6.06zM36.97 32.97h4.06v1.06h-4.06zM54.97 32.97h2.06v1.06h-2.06zM60.97 32.97h3.06v1.06h-3.06zM67.97 32.97h5.06v1.06h-5.06zM73.97 32.97h4.06v1.06h-4.06zM5.97 33.97h3.06v1.06h-3.06zM22.97 33.97h3.06v1.06h-3.06zM38.97 33.97h2.06v1.06h-2.06zM54.97 33.97h2.06v1.06h-2.06zM60.97 33.97h3.06v1.06h-3.06zM67.97 33.97h3.06v1.06h-3.06zM75.97 33.97h3.06v1.06h-3.06zM5.97 34.97h3.06v1.06h-3.06zM38.97 34.97h3.06v1.06h-3.06zM54.97 34.97h2.06v1.06h-2.06zM61.97 34.97h2.06v1.06h-2.06zM67.97 34.97h2.06v1.06h-2.06zM76.97 34.97h2.06v1.06h-2.06zM5.97 35.97h2.06v1.06h-2.06zM38.97 35.97h8.06v1.06h-8.06zM54.97 35.97h2.06v1.06h-2.06zM57.97 35.97h1.06v1.06h-1.06zM60.97 35.97h3.06v1.06h-3.06zM66.97 35.97h3.06v1.06h-3.06zM76.97 35.97h2.06v1.06h-2.06zM5.97 36.97h2.06v1.06h-2.06zM36.97 36.97h12.06v1.06h-12.06zM54.97 36.97h2.06v1.06h-2.06zM60.97 36.97h3.06v1.06h-3.06zM66.97 36.97h2.06v1.06h-2.06zM76.97 36.97h2.06v1.06h-2.06zM5.97 37.97h12.06v1.06h-12.06zM34.97 37.97h7.06v1.06h-7.06zM42.97 37.97h1.06v1.06h-1.06zM44.97 37.97h4.06v1.06h-4.06zM54.97 37.97h3.06v1.06h-3.06zM60.97 37.97h2.06v1.06h-2.06zM66.97 37.97h2.06v1.06h-2.06zM76.97 37.97h2.06v1.06h-2.06zM5.97 38.97h14.06v1.06h-14.06zM32.97 38.97h6.06v1.06h-6.06zM42.97 38.97h1.06v1.06h-1.06zM46.97 38.97h2.06v1.06h-2.06zM55.97 38.97h2.06v1.06h-2.06zM60.97 38.97h2.06v1.06h-2.06zM66.97 38.97h2.06v1.06h-2.06zM70.97 38.97h1.06v1.06h-1.06zM76.97 38.97h2.06v1.06h-2.06zM4.97 39.97h5.06v1.06h-5.06zM15.97 39.97h6.06v1.06h-6.06zM31.97 39.97h4.06v1.06h-4.06zM42.97 39.97h1.06v1.06h-1.06zM46.97 39.97h2.06v1.06h-2.06zM55.97 39.97h2.06v1.06h-2.06zM59.97 39.97h3.06v1.06h-3.06zM66.97 39.97h2.06v1.06h-2.06zM75.97 39.97h3.06v1.06h-3.06zM4.97 40.97h3.06v1.06h-3.06zM15.97 40.97h1.06v1.06h-1.06zM17.97 40.97h5.06v1.06h-5.06zM31.97 40.97h3.06v1.06h-3.06zM42.97 40.97h1.06v1.06h-1.06zM45.97 40.97h3.06v1.06h-3.06zM55.97 40.97h6.06v1.06h-6.06zM66.97 40.97h2.06v1.06h-2.06zM74.97 40.97h3.06v1.06h-3.06zM4.97 41.97h2.06v1.06h-2.06zM15.97 41.97h1.06v1.06h-1.06zM19.97 41.97h3.06v1.06h-3.06zM31.97 41.97h2.06v1.06h-2.06zM42.97 41.97h1.06v1.06h-1.06zM44.97 41.97h3.06v1.06h-3.06zM55.97 41.97h6.06v1.06h-6.06zM66.97 41.97h2.06v1.06h-2.06zM73.97 41.97h3.06v1.06h-3.06zM4.97 42.97h2.06v1.06h-2.06zM15.97 42.97h1.06v1.06h-1.06zM20.97 42.97h2.06v1.06h-2.06zM31.97 42.97h2.06v1.06h-2.06zM41.97 42.97h5.06v1.06h-5.06zM56.97 42.97h4.06v1.06h-4.06zM66.97 42.97h4.06v1.06h-4.06zM72.97 42.97h3.06v1.06h-3.06zM4.97 43.97h3.06v1.06h-3.06zM15.97 43.97h1.06v1.06h-1.06zM19.97 43.97h3.06v1.06h-3.06zM31.97 43.97h4.06v1.06h-4.06zM38.97 43.97h7.06v1.06h-7.06zM55.97 43.97h3.06v1.06h-3.06zM66.97 43.97h9.06v1.06h-9.06zM4.97 44.97h4.06v1.06h-4.06zM15.97 44.97h7.06v1.06h-7.06zM31.97 44.97h12.06v1.06h-12.06zM54.97 44.97h4.06v1.06h-4.06zM68.97 44.97h6.06v1.06h-6.06zM5.97 45.97h16.06v1.06h-16.06zM33.97 45.97h7.06v1.06h-7.06zM53.97 45.97h4.06v1.06h-4.06zM70.97 45.97h3.06v1.06h-3.06zM7.97 46.97h11.06v1.06h-11.06zM37.97 46.97h3.06v1.06h-3.06zM53.97 46.97h3.06v1.06h-3.06zM70.97 46.97h3.06v1.06h-3.06zM9.97 47.97h3.06v1.06h-3.06zM36.97 47.97h3.06v1.06h-3.06zM52.97 47.97h4.06v1.06h-4.06zM69.97 47.97h3.06v1.06h-3.06zM9.97 48.97h4.06v1.06h-4.06zM35.97 48.97h3.06v1.06h-3.06zM49.97 48.97h5.06v1.06h-5.06zM67.97 48.97h5.06v1.06h-5.06zM10.97 49.97h4.06v1.06h-4.06zM34.97 49.97h3.06v1.06h-3.06zM48.97 49.97h6.06v1.06h-6.06zM66.97 49.97h4.06v1.06h-4.06zM11.97 50.97h3.06v1.06h-3.06zM33.97 50.97h3.06v1.06h-3.06zM47.97 50.97h4.06v1.06h-4.06zM64.97 50.97h5.06v1.06h-5.06zM12.97 51.97h3.06v1.06h-3.06zM32.97 51.97h3.06v1.06h-3.06zM47.97 51.97h3.06v1.06h-3.06zM63.97 51.97h5.06v1.06h-5.06zM13.97 52.97h4.06v1.06h-4.06zM21.97 52.97h5.06v1.06h-5.06zM30.97 52.97h4.06v1.06h-4.06zM47.97 52.97h2.06v1.06h-2.06zM61.97 52.97h5.06v1.06h-5.06zM14.97 53.97h6.06v1.06h-6.06zM21.97 53.97h6.06v1.06h-6.06zM28.97 53.97h5.06v1.06h-5.06zM47.97 53.97h5.06v1.06h-5.06zM58.97 53.97h6.06v1.06h-6.06zM15.97 54.97h8.06v1.06h-8.06zM24.97 54.97h8.06v1.06h-8.06zM48.97 54.97h14.06v1.06h-14.06zM19.97 55.97h3.06v1.06h-3.06zM25.97 55.97h5.06v1.06h-5.06zM50.97 55.97h10.06v1.06h-10.06zM52.97 56.97h3.06v1.06h-3.06z"/>
<path fill="#84c07a" d="M10.97 14.97h2.06v1.06h-2.06zM8.97 15.97h2.06v1.06h-2.06zM11.97 15.97h5.06v1.06h-5.06zM8.97 16.97h1.06v1.06h-1.06zM10.97 16.97h1.06v1.06h-1.06zM15.97 16.97h3.06v1.06h-3.06zM8.97 17.97h1.06v1.06h-1.06zM11.97 17.97h1.06v1.06h-1.06zM17.97 17.97h2.06v1.06h-2.06zM7.97 18.97h2.06v1.06h-2.06zM11.97 18.97h2.06v1.06h-2.06zM19.97 18.97h2.06v1.06h-2.06zM7.97 19.97h2.06v1.06h-2.06zM12.97 19.97h1.06v1.06h-1.06zM20.97 19.97h2.06v1.06h-2.06zM7.97 20.97h2.06v1.06h-2.06zM13.97 20.97h1.06v1.06h-1.06zM21.97 20.97h2.06v1.06h-2.06zM7.97 21.97h2.06v1.06h-2.06zM14.97 21.97h1.06v1.06h-1.06zM21.97 21.97h2.06v1.06h-2.06zM7.97 22.97h2.06v1.06h-2.06zM15.97 22.97h1.06v1.06h-1.06zM22.97 22.97h2.06v1.06h-2.06zM7.97 23.97h2.06v1.06h-2.06zM15.97 23.97h1.06v1.06h-1.06zM22.97 23.97h2.06v1.06h-2.06zM8.97 24.97h2.06v1.06h-2.06zM16.97 24.97h1.06v1.06h-1.06zM23.97 24.97h1.06v1.06h-1.06zM9.97 25.97h2.06v1.06h-2.06zM17.97 25.97h1.06v1.06h-1.06zM22.97 25.97h1.06v1.06h-1.06zM10.97 26.97h2.06v1.06h-2.06zM18.97 26.97h1.06v1.06h-1.06zM11.97 27.97h2.06v1.06h-2.06zM19.97 27.97h1.06v1.06h-1.06zM12.97 28.97h1.06v1.06h-1.06zM19.97 28.97h1.06v1.06h-1.06z"/>
<path fill="#6b4a00" d="M60.97 14.97h1.06v1.06h-1.06zM59.97 15.97h2.06v1.06h-2.06zM57.97 16.97h4.06v1.06h-4.06zM56.97 17.97h6.06v1.06h-6.06zM55.97 18.97h7.06v1.06h-7.06zM53.97 19.97h10.06v1.06h-10.06zM57.97 20.97h6.06v1.06h-6.06zM59.97 21.97h2.06v1.06h-2.06z"/>
<path fill="#33ff00" d="M10.97 15.97h1.06v1.06h-1.06zM9.97 16.97h1.06v1.06h-1.06zM11.97 16.97h4.06v1.06h-4.06zM9.97 17.97h2.06v1.06h-2.06zM12.97 17.97h5.06v1.06h-5.06zM9.97 18.97h2.06v1.06h-2.06zM13.97 18.97h6.06v1.06h-6.06zM9.97 19.97h3.06v1.06h-3.06zM13.97 19.97h7.06v1.06h-7.06zM9.97 20.97h4.06v1.06h-4.06zM14.97 20.97h7.06v1.06h-7.06zM9.97 21.97h5.06v1.06h-5.06zM15.97 21.97h6.06v1.06h-6.06zM9.97 22.97h6.06v1.06h-6.06zM16.97 22.97h6.06v1.06h-6.06zM9.97 23.97h6.06v1.06h-6.06zM16.97 23.97h6.06v1.06h-6.06zM10.97 24.97h6.06v1.06h-6.06zM17.97 24.97h6.06v1.06h-6.06zM11.97 25.97h6.06v1.06h-6.06zM18.97 25.97h4.06v1.06h-4.06zM12.97 26.97h6.06v1.06h-6.06zM19.97 26.97h3.06v1.06h-3.06zM13.97 27.97h6.06v1.06h-6.06zM20.97 27.97h2.06v1.06h-2.06zM13.97 28.97h6.06v1.06h-6.06zM20.97 28.97h2.06v1.06h-2.06zM21.97 29.97h1.06v1.06h-1.06z"/>
<path fill="#d8f46a" d="M61.97 21.97h2.06v1.06h-2.06zM60.97 22.97h4.06v1.06h-4.06zM61.97 23.97h4.06v1.06h-4.06zM61.97 24.97h5.06v1.06h-5.06zM62.97 25.97h1.06v1.06h-1.06zM64.97 25.97h1.06v1.06h-1.06zM66.97 25.97h1.06v1.06h-1.06zM63.97 26.97h1.06v1.06h-1.06zM65.97 26.97h1.06v1.06h-1.06zM67.97 26.97h1.06v1.06h-1.06zM62.97 27.97h1.06v1.06h-1.06zM64.97 27.97h1.06v1.06h-1.06zM66.97 27.97h1.06v1.06h-1.06zM68.97 27.97h1.06v1.06h-1.06zM63.97 28.97h1.06v1.06h-1.06zM65.97 28.97h1.06v1.06h-1.06zM67.97 28.97h1.06v1.06h-1.06z"/>
<path fill="#6b3303" d="M27.97 22.97h2.06v1.06h-2.06zM26.97 23.97h3.06v1.06h-3.06zM25.97 24.97h3.06v1.06h-3.06zM24.97 25.97h3.06v1.06h-3.06zM23.97 26.97h3.06v1.06h-3.06zM23.97 27.97h2.06v1.06h-2.06zM23.97 28.97h2.06v1.06h-2.06zM23.97 29.97h2.06v1.06h-2.06zM23.97 30.97h2.06v1.06h-2.06z"/>
<path fill="#ffe100" d="M63.97 25.97h1.06v1.06h-1.06zM65.97 25.97h1.06v1.06h-1.06zM62.97 26.97h1.06v1.06h-1.06zM64.97 26.97h1.06v1.06h-1.06zM66.97 26.97h1.06v1.06h-1.06zM63.97 27.97h1.06v1.06h-1.06zM65.97 27.97h1.06v1.06h-1.06zM67.97 27.97h1.06v1.06h-1.06zM64.97 28.97h1.06v1.06h-1.06zM66.97 28.97h1.06v1.06h-1.06zM68.97 28.97h1.06v1.06h-1.06zM65.97 29.97h5.06v1.06h-5.06zM65.97 30.97h4.06v1.06h-4.06zM65.97 31.97h3.06v1.06h-3.06zM65.97 32.97h2.06v1.06h-2.06zM65.97 33.97h2.06v1.06h-2.06zM57.97 34.97h1.06v1.06h-1.06zM65.97 34.97h2.06v1.06h-2.06zM56.97 35.97h1.06v1.06h-1.06zM58.97 35.97h1.06v1.06h-1.06zM65.97 35.97h1.06v1.06h-1.06zM57.97 36.97h1.06v1.06h-1.06zM65.97 36.97h1.06v1.06h-1.06zM65.97 37.97h1.06v1.06h-1.06zM70.97 37.97h1.06v1.06h-1.06zM65.97 38.97h1.06v1.06h-1.06zM69.97 38.97h1.06v1.06h-1.06zM71.97 38.97h1.06v1.06h-1.06zM64.97 39.97h2.06v1.06h-2.06zM70.97 39.97h1.06v1.06h-1.06zM64.97 40.97h2.06v1.06h-2.06zM63.97 41.97h3.06v1.06h-3.06zM63.97 42.97h3.06v1.06h-3.06zM62.97 43.97h4.06v1.06h-4.06zM61.97 44.97h7.06v1.06h-7.06zM60.97 45.97h10.06v1.06h-10.06zM59.97 46.97h11.06v1.06h-11.06zM59.97 47.97h10.06v1.06h-10.06zM58.97 48.97h9.06v1.06h-9.06zM57.97 49.97h9.06v1.06h-9.06zM56.97 50.97h8.06v1.06h-8.06zM55.97 51.97h8.06v1.06h-8.06zM51.97 52.97h10.06v1.06h-10.06zM52.97 53.97h6.06v1.06h-6.06z"/>
<path fill="#dcc24e" d="M63.97 29.97h2.06v1.06h-2.06zM63.97 30.97h2.06v1.06h-2.06zM63.97 31.97h2.06v1.06h-2.06zM63.97 32.97h2.06v1.06h-2.06zM63.97 33.97h2.06v1.06h-2.06zM63.97 34.97h2.06v1.06h-2.06zM63.97 35.97h2.06v1.06h-2.06zM63.97 36.97h2.06v1.06h-2.06zM63.97 37.97h2.06v1.06h-2.06zM64.97 38.97h1.06v1.06h-1.06zM63.97 40.97h1.06v1.06h-1.06zM62.97 41.97h1.06v1.06h-1.06zM62.97 42.97h1.06v1.06h-1.06zM61.97 43.97h1.06v1.06h-1.06zM60.97 44.97h1.06v1.06h-1.06zM59.97 45.97h1.06v1.06h-1.06zM58.97 47.97h1.06v1.06h-1.06zM57.97 48.97h1.06v1.06h-1.06zM56.97 49.97h1.06v1.06h-1.06zM55.97 50.97h1.06v1.06h-1.06zM52.97 51.97h3.06v1.06h-3.06z"/>
<path fill="#a00a52" d="M11.97 31.97h2.06v1.06h-2.06zM18.97 31.97h1.06v1.06h-1.06zM33.97 31.97h2.06v1.06h-2.06zM9.97 32.97h3.06v1.06h-3.06zM19.97 32.97h2.06v1.06h-2.06zM27.97 32.97h2.06v1.06h-2.06zM34.97 32.97h2.06v1.06h-2.06zM8.97 33.97h2.06v1.06h-2.06zM21.97 33.97h1.06v1.06h-1.06zM25.97 33.97h3.06v1.06h-3.06zM35.97 33.97h3.06v1.06h-3.06zM8.97 34.97h2.06v1.06h-2.06zM22.97 34.97h3.06v1.06h-3.06zM36.97 34.97h2.06v1.06h-2.06zM7.97 35.97h3.06v1.06h-3.06zM36.97 35.97h2.06v1.06h-2.06zM7.97 36.97h2.06v1.06h-2.06zM34.97 46.97h3.06v1.06h-3.06zM12.97 47.97h3.06v1.06h-3.06zM33.97 47.97h3.06v1.06h-3.06zM13.97 48.97h3.06v1.06h-3.06zM33.97 48.97h2.06v1.06h-2.06zM14.97 49.97h3.06v1.06h-3.06zM32.97 49.97h2.06v1.06h-2.06zM14.97 50.97h5.06v1.06h-5.06zM30.97 50.97h3.06v1.06h-3.06zM15.97 51.97h17.06v1.06h-17.06zM17.97 52.97h4.06v1.06h-4.06zM26.97 52.97h4.06v1.06h-4.06zM20.97 53.97h1.06v1.06h-1.06zM27.97 53.97h1.06v1.06h-1.06z"/>
<path fill="#ff0000" d="M13.97 31.97h5.06v1.06h-5.06zM29.97 31.97h4.06v1.06h-4.06zM12.97 32.97h7.06v1.06h-7.06zM29.97 32.97h5.06v1.06h-5.06zM10.97 33.97h3.06v1.06h-3.06zM18.97 33.97h3.06v1.06h-3.06zM28.97 33.97h7.06v1.06h-7.06zM10.97 34.97h2.06v1.06h-2.06zM19.97 34.97h3.06v1.06h-3.06zM25.97 34.97h11.06v1.06h-11.06zM10.97 35.97h3.06v1.06h-3.06zM18.97 35.97h18.06v1.06h-18.06zM9.97 36.97h2.06v1.06h-2.06zM12.97 36.97h24.06v1.06h-24.06zM17.97 37.97h17.06v1.06h-17.06zM19.97 38.97h13.06v1.06h-13.06zM21.97 39.97h10.06v1.06h-10.06zM22.97 40.97h9.06v1.06h-9.06zM22.97 41.97h9.06v1.06h-9.06zM22.97 42.97h9.06v1.06h-9.06zM22.97 43.97h9.06v1.06h-9.06zM22.97 44.97h9.06v1.06h-9.06zM21.97 45.97h12.06v1.06h-12.06zM18.97 46.97h16.06v1.06h-16.06zM15.97 47.97h18.06v1.06h-18.06zM16.97 48.97h17.06v1.06h-17.06zM17.97 49.97h15.06v1.06h-15.06zM19.97 50.97h11.06v1.06h-11.06z"/>
<path fill="#ffb9f6" d="M13.97 33.97h5.06v1.06h-5.06zM12.97 34.97h7.06v1.06h-7.06zM13.97 35.97h5.06v1.06h-5.06zM41.97 37.97h1.06v1.06h-1.06zM43.97 37.97h1.06v1.06h-1.06zM41.97 38.97h1.06v1.06h-1.06zM43.97 38.97h1.06v1.06h-1.06zM14.97 39.97h1.06v1.06h-1.06zM41.97 39.97h1.06v1.06h-1.06zM43.97 39.97h1.06v1.06h-1.06zM14.97 40.97h1.06v1.06h-1.06zM16.97 40.97h1.06v1.06h-1.06zM14.97 41.97h1.06v1.06h-1.06zM16.97 41.97h1.06v1.06h-1.06zM14.97 42.97h1.06v1.06h-1.06zM16.97 42.97h1.06v1.06h-1.06z"/>
<path fill="#fff3a8" d="M57.97 33.97h1.06v1.06h-1.06zM56.97 34.97h1.06v1.06h-1.06zM58.97 34.97h1.06v1.06h-1.06zM56.97 36.97h1.06v1.06h-1.06zM58.97 36.97h1.06v1.06h-1.06zM70.97 36.97h1.06v1.06h-1.06zM57.97 37.97h1.06v1.06h-1.06zM69.97 37.97h1.06v1.06h-1.06zM71.97 37.97h1.06v1.06h-1.06zM68.97 38.97h1.06v1.06h-1.06zM72.97 38.97h1.06v1.06h-1.06zM69.97 39.97h1.06v1.06h-1.06zM71.97 39.97h1.06v1.06h-1.06zM70.97 40.97h1.06v1.06h-1.06z"/>
<path fill="#fdea80" d="M62.97 37.97h1.06v1.06h-1.06zM62.97 38.97h2.06v1.06h-2.06zM62.97 39.97h2.06v1.06h-2.06zM61.97 40.97h2.06v1.06h-2.06zM61.97 41.97h1.06v1.06h-1.06zM60.97 42.97h2.06v1.06h-2.06zM58.97 43.97h3.06v1.06h-3.06zM58.97 44.97h2.06v1.06h-2.06zM57.97 45.97h2.06v1.06h-2.06zM56.97 46.97h3.06v1.06h-3.06zM56.97 47.97h2.06v1.06h-2.06zM54.97 48.97h3.06v1.06h-3.06zM54.97 49.97h2.06v1.06h-2.06zM52.97 50.97h3.06v1.06h-3.06z"/>
<path fill="#ff1fc0" d="M41.97 40.97h1.06v1.06h-1.06zM43.97 40.97h1.06v1.06h-1.06zM41.97 41.97h1.06v1.06h-1.06zM43.97 41.97h1.06v1.06h-1.06zM14.97 43.97h1.06v1.06h-1.06zM16.97 43.97h1.06v1.06h-1.06zM14.97 44.97h1.06v1.06h-1.06z"/>
<path fill="#8a5a05" d="M51.97 50.97h1.06v1.06h-1.06zM50.97 51.97h2.06v1.06h-2.06zM49.97 52.97h2.06v1.06h-2.06z"/>
</svg>
<svg class="b" style="left:500px;top:210px;" width="60" height="35" viewBox="0 0 60 35"><rect x="22.3" y="7.4" width="3.6" height="3.6" fill="#1b1b1b" stroke="#0a72a8" stroke-width="1"/><path d="M6.2 26.6L12.6 20.4" stroke="#111" stroke-width="3.8" stroke-linecap="round"/><path d="M6.2 26.6L12.6 20.4" stroke="#fff" stroke-width="2.3" stroke-linecap="round"/><path d="M5.2 28.3h8.7" stroke="#c8c8c8" stroke-width="0.7"/><path d="M36.6 26.2L42 20.8" stroke="#111" stroke-width="5.6" stroke-linecap="round"/><path d="M36.6 26.2L42 20.8" stroke="#f4f4f4" stroke-width="4" stroke-linecap="round"/><path d="M38.8 28.3h5.2" stroke="#aaa" stroke-width="0.7"/></svg>
<div class="b " style="left:26px;top:396px;width:123.1px;height:29.5px;background:#252525;"></div>
<div class="b " style="left:31px;top:398px;width:20.3px;height:10.3px;background:#1b1b1b;"></div>
<svg class="b" style="left:31px;top:398px;" width="20.3" height="10.3" viewBox="0 0 20.3 10.3"><rect x="2.300" y="1.500" width="5.800" height="7.600" rx="1" fill="none" stroke="#b4b4b4" stroke-width="1"/><path d="M6.600 3.600v3.400L3.800 5.300z" fill="#b4b4b4"/><path d="M13.200 4.100l2.200 2.200 2.200-2.200" fill="none" stroke="#e6e6e6" stroke-width="1.200"/></svg>
<div class="b " style="left:56px;top:398px;width:10.5px;height:10.3px;background:#1b1b1b;"></div>
<svg class="b" style="left:56px;top:398px;" width="10.5" height="10.3" viewBox="0 0 10.5 10.3"><path d="M2.400 2.600l5.800 5.400M8.200 2.600L2.400 8" stroke="#9c9c9c" stroke-width="1.400" stroke-linecap="round" fill="none"/></svg>
<div class="b " style="left:71.5px;top:398px;width:10.5px;height:10.3px;background:#1b1b1b;"></div>
<svg class="b" style="left:71.5px;top:398px;" width="10.5" height="10.3" viewBox="0 0 10.5 10.3"><path d="M5.250 1.800L8.600 6.200H6.700v2.600H3.800V6.200H1.900z" fill="none" stroke="#4c4c4c" stroke-width="0.900"/></svg>
<div class="b " style="left:87.3px;top:398px;width:10.1px;height:10.3px;background:#1b1b1b;"></div>
<svg class="b" style="left:87.3px;top:398px;" width="10.1" height="10.3" viewBox="0 0 10.1 10.3"><path d="M5.050 9L1.700 4.600h1.900V2h2.900v2.600h1.900z" fill="none" stroke="#bdbdbd" stroke-width="1"/></svg>
<div class="b " style="left:102.6px;top:398px;width:10.7px;height:10.3px;background:#1b1b1b;"></div>
<svg class="b" style="left:102.6px;top:398px;" width="10.7" height="10.3" viewBox="0 0 10.7 10.3"><rect x="2" y="1.600" width="5" height="6" rx="1.200" fill="none" stroke="#bdbdbd" stroke-width="1"/><rect x="3.800" y="3" width="5" height="6" rx="1.200" fill="#1b1b1b" stroke="#bdbdbd" stroke-width="1"/></svg>
<div class="b " style="left:118px;top:398px;width:10.6px;height:10.3px;background:#1b1b1b;"></div>
<svg class="b" style="left:118px;top:398px;" width="10.6" height="10.3" viewBox="0 0 10.6 10.3"><rect x="2.800" y="1.400" width="5.200" height="6.800" rx="1.400" fill="none" stroke="#bdbdbd" stroke-width="1"/><path d="M5.400 3.400v5.600M3.700 7.400l1.700 1.700 1.700-1.700" fill="none" stroke="#bdbdbd" stroke-width="1"/></svg>
<div class="b " style="left:133.5px;top:398px;width:10.5px;height:10.3px;background:#1b1b1b;"></div>
<svg class="b" style="left:133.5px;top:398px;" width="10.5" height="10.3" viewBox="0 0 10.5 10.3"></svg>
<div class="t" style="top:398.26px;font-size:8.2px;line-height:11.48px;color:#bdbdbd;left:-11.2px;width:300px;text-align:center;transform:scaleX(.82);">FX</div>
<div class="t" style="top:413.05px;font-size:7.5px;line-height:10.5px;color:#d2d2d2;left:31px;">Blend mode:</div>
<div class="b " style="left:74.7px;top:411.5px;width:69.8px;height:12px;background:#1b1b1b;"></div>
<div class="t" style="top:413.05px;font-size:7.5px;line-height:10.5px;color:#d2d2d2;left:77.6px;">Normal</div>
<svg class="b" style="left:136.5px;top:414.5px;" width="7" height="6" viewBox="0 0 7 6"><path d="M1.4 2L3.5 4.1 5.6 2" fill="none" stroke="#e0e0e0" stroke-width="1"/></svg>
<div class="b " style="left:391px;top:396.2px;width:245.6px;height:14.5px;background:#222222;"></div>
<div class="b " style="left:395.25px;top:398px;width:11.3px;height:11.3px;background:#1b1b1b;"></div>
<svg class="b" style="left:395.25px;top:398px;" width="11.3" height="11.3" viewBox="0 0 20 20"><path d="M10 4.500v11M4.500 10h11" stroke="#ececec" stroke-width="2.200"/></svg>
<div class="b " style="left:408.45px;top:398px;width:11.3px;height:11.3px;background:#1b1b1b;"></div>
<svg class="b" style="left:408.45px;top:398px;" width="11.3" height="11.3" viewBox="0 0 20 20"><path d="M5 10h10" stroke="#6c6c6c" stroke-width="1.800"/></svg>
<div class="b " style="left:421.65px;top:398px;width:11.3px;height:11.3px;background:#1b1b1b;"></div>
<svg class="b" style="left:421.65px;top:398px;" width="11.3" height="11.3" viewBox="0 0 20 20"><path d="M5 4h10v12H5z" fill="#dcdcdc"/><path d="M5 4h4v4H5z" fill="#8a8a8a"/><path d="M9.200 4v12" stroke="#a0a0a0" stroke-width="0.800"/></svg>
<div class="b " style="left:434.85px;top:398px;width:11.3px;height:11.3px;background:#1b1b1b;"></div>
<svg class="b" style="left:434.85px;top:398px;" width="11.3" height="11.3" viewBox="0 0 20 20"><path d="M15.500 10H5.500M9 6l-4 4 4 4" fill="none" stroke="#7a7a7a" stroke-width="1.900"/></svg>
<div class="b " style="left:448.05px;top:398px;width:11.3px;height:11.3px;background:#1b1b1b;"></div>
<svg class="b" style="left:448.05px;top:398px;" width="11.3" height="11.3" viewBox="0 0 20 20"><path d="M4.500 10h10M11 6l4 4-4 4" fill="none" stroke="#7a7a7a" stroke-width="1.900"/></svg>
<div class="b " style="left:470.35px;top:398px;width:11.3px;height:11.3px;background:#1b1b1b;"></div>
<svg class="b" style="left:470.35px;top:398px;" width="11.3" height="11.3" viewBox="0 0 20 20"><path d="M5.800 5v10" stroke="#d8d8d8" stroke-width="2.200"/><path d="M15 4.800v10.400L8 10z" fill="#d8d8d8"/></svg>
<div class="b " style="left:483.55px;top:398px;width:11.3px;height:11.3px;background:#1b1b1b;"></div>
<svg class="b" style="left:483.55px;top:398px;" width="11.3" height="11.3" viewBox="0 0 20 20"><path d="M14.200 5v10" stroke="#d8d8d8" stroke-width="2.200"/><path d="M11.500 4.800v10.400L4.500 10z" fill="#d8d8d8"/></svg>
<div class="b " style="left:496.75px;top:398px;width:11.3px;height:11.3px;background:#1b1b1b;"></div>
<svg class="b" style="left:496.75px;top:398px;" width="11.3" height="11.3" viewBox="0 0 20 20"><path d="M13.500 4.800v10.400L6.500 10z" fill="#d8d8d8"/></svg>
<div class="b " style="left:509.95px;top:398px;width:11.3px;height:11.3px;background:#1b1b1b;"></div>
<svg class="b" style="left:509.95px;top:398px;" width="11.3" height="11.3" viewBox="0 0 20 20"><path d="M7 4.800v10.400L14 10z" fill="#f0f0f0"/></svg>
<div class="b " style="left:523.15px;top:398px;width:11.3px;height:11.3px;background:#1b1b1b;"></div>
<svg class="b" style="left:523.15px;top:398px;" width="11.3" height="11.3" viewBox="0 0 20 20"><path d="M5.800 5v10" stroke="#d8d8d8" stroke-width="2.200"/><path d="M8.500 4.800v10.400l7-5.200z" fill="#d8d8d8"/></svg>
<div class="b " style="left:536.35px;top:398px;width:11.3px;height:11.3px;background:#1b1b1b;"></div>
<svg class="b" style="left:536.35px;top:398px;" width="11.3" height="11.3" viewBox="0 0 20 20"><path d="M14.200 5v10" stroke="#d8d8d8" stroke-width="2.200"/><path d="M5 4.800v10.400l7-5.200z" fill="#d8d8d8"/></svg>
<div class="b " style="left:558.35px;top:398px;width:11.3px;height:11.3px;background:#1b1b1b;"></div>
<svg class="b" style="left:558.35px;top:398px;" width="11.3" height="11.3" viewBox="0 0 20 20"><path d="M4.500 6h11M4.500 10h11M4.500 14h11" stroke="#e0e0e0" stroke-width="1.800"/></svg>
<div class="b " style="left:571.45px;top:398px;width:11.3px;height:11.3px;background:#1b1b1b;"></div>
<svg class="b" style="left:571.45px;top:398px;" width="11.3" height="11.3" viewBox="0 0 20 20"><path d="M10 4.500l6 3-6 3-6-3zM4 11l6 3 6-3" fill="none" stroke="#8a8a8a" stroke-width="1.300"/><path d="M4.500 4.500l11 11" stroke="#8a8a8a" stroke-width="1.200"/></svg>
<div class="b " style="left:584.65px;top:398px;width:11.3px;height:11.3px;background:#1b1b1b;"></div>
<svg class="b" style="left:584.65px;top:398px;" width="11.3" height="11.3" viewBox="0 0 20 20"><path d="M6.200 6.200a5.400 5.400 0 11-1.400 5" fill="none" stroke="#bdbdbd" stroke-width="1.500"/><path d="M3.200 4.200l3.600 0.400-0.400 3.400" fill="none" stroke="#bdbdbd" stroke-width="1.300"/></svg>
<div class="b " style="left:597.3px;top:398px;width:33.7px;height:11.3px;background:#1b1b1b;"></div>
<div class="b " style="left:597.3px;top:398px;width:4.2px;height:11.3px;background:#3a3a3a;"></div>
<div class="t" style="top:399.25px;font-size:7.5px;line-height:10.5px;color:#d0d0d0;left:602px;">6.0 FPS</div>
<svg class="b" style="left:624.3px;top:398px;" width="7" height="11.3" viewBox="0 0 7 11.3"><path d="M1.400 4.400L3.500 2.200 5.600 4.400M1.400 6.900L3.500 9.100 5.600 6.900" fill="none" stroke="#d8d8d8" stroke-width="0.950"/></svg>
<div class="b " style="left:26px;top:427px;width:611.2px;height:78px;background:#252525;"></div>
<div class="b " style="left:31px;top:429.6px;width:38.6px;height:14.6px;background:#1b1b1b;"></div>
<div class="b " style="left:31px;top:446px;width:38.6px;height:21px;background:#1b1b1b;"></div>
<div class="b " style="left:31px;top:468.4px;width:38.6px;height:15.6px;background:#1b1b1b;"></div>
<div class="b " style="left:31px;top:487px;width:38.6px;height:15.4px;background:#1b1b1b;"></div>
<div class="b " style="left:69.6px;top:429.6px;width:81.4px;height:14.6px;background:#333333;"></div>
<div class="t" style="top:432.85px;font-size:7.5px;line-height:10.5px;color:#d2d2d2;left:-40px;width:300px;text-align:center;">Opacity: 100</div>
<svg class="b" style="left:142px;top:430.4px;" width="7" height="13" viewBox="0 0 7 13"><path d="M1.4 4L3.5 1.8 5.6 4M1.4 9L3.5 11.2 5.6 9" fill="none" stroke="#d0d0d0" stroke-width="0.9"/></svg>
<div class="b " style="left:152.4px;top:429.6px;width:20.6px;height:14.8px;background:#3a3a3a;box-sizing:border-box;border:1.2px solid #c4c4c4"></div>
<div class="t" style="top:432.85px;font-size:7.5px;line-height:10.5px;color:#d2d2d2;left:12.6px;width:300px;text-align:center;">1</div>
<div class="b " style="left:69.6px;top:446px;width:81.4px;height:21px;background:#3d3d3d;box-sizing:border-box;border:1.2px solid #d6d6d6"></div>
<div class="b " style="left:152.4px;top:446px;width:20.6px;height:21px;background:#8a8a8a;box-sizing:border-box;border:1.6px solid #b4b4b4"></div>
<svg class="b" style="left:155.4px;top:449px;" width="14.6" height="15" viewBox="0 0 14.6 15"><rect width="14.600" height="15" fill="#6e6e6e"/><rect x="0" y="0" width="3.650" height="3.750" fill="#8a8a8a"/><rect x="7.3" y="0" width="3.650" height="3.750" fill="#8a8a8a"/><rect x="3.65" y="3.75" width="3.650" height="3.750" fill="#8a8a8a"/><rect x="10.95" y="3.75" width="3.650" height="3.750" fill="#8a8a8a"/><rect x="0" y="7.5" width="3.650" height="3.750" fill="#8a8a8a"/><rect x="7.3" y="7.5" width="3.650" height="3.750" fill="#8a8a8a"/><rect x="3.65" y="11.25" width="3.650" height="3.750" fill="#8a8a8a"/><rect x="10.95" y="11.25" width="3.650" height="3.750" fill="#8a8a8a"/><rect x="1.800" y="6.600" width="1.600" height="1.600" fill="#f4f4f4"/><rect x="5.600" y="6.600" width="1.600" height="1.600" fill="#f070c8"/><rect x="9.600" y="6.200" width="1.200" height="1.600" fill="#fff"/><rect x="11.800" y="6.400" width="1.600" height="1.600" fill="#ffe54a"/></svg>
<div class="b " style="left:71px;top:468.6px;width:78.6px;height:15px;background:#2a2a2a;"></div>
<div class="b " style="left:71px;top:487px;width:78.6px;height:15.4px;background:#2a2a2a;"></div>
<div class="b " style="left:155px;top:468px;width:14.6px;height:16px;background:#5a5a5a;"></div>
<svg class="b" style="left:155px;top:468px;" width="14.6" height="16" viewBox="0 0 14.6 16"><rect x="1" y="2" width="12.600" height="12" fill="#6a6a6a"/><rect x="1" y="2" width="4.200" height="4" fill="#7d7d7d"/><rect x="9.400" y="2" width="4.200" height="4" fill="#7d7d7d"/><rect x="5.200" y="6" width="4.200" height="4" fill="#7d7d7d"/><rect x="1" y="10" width="4.200" height="4" fill="#7d7d7d"/><rect x="9.400" y="10" width="4.200" height="4" fill="#7d7d7d"/><circle cx="4.800" cy="8.800" r="2.500" fill="#e8141c"/><rect x="2.200" y="8.200" width="5.600" height="1.500" fill="#fff"/><path d="M2.600 5.200l2.400 0.300-0.400 1.800z" fill="#3be010"/><path d="M10.800 4.600c2 2.400 1.400 6-1.600 7.400l-0.800-0.800c2.200-1.600 2.400-4 1.200-6z" fill="#f6d820" stroke="#000" stroke-width="0.600"/></svg>
<div class="b " style="left:155px;top:486.6px;width:14.6px;height:16px;background:#3a3a3a;"></div>
<div class="b " style="left:156.4px;top:488.4px;width:12.6px;height:11.8px;background:#fbc6f0;"></div>
<div class="b " style="left:156.4px;top:488.4px;width:12.6px;height:7px;background:#f2b8e2;"></div>
<div class="t" style="top:452.05px;font-size:7.5px;line-height:10.5px;color:#d2d2d2;left:72.8px;">Layer 3</div>
<div class="b " style="left:142.2px;top:454.9px;width:3px;height:3px;background:#c9c9c9;"></div>
<svg class="b" style="left:58.5px;top:453.4px;" width="10" height="6" viewBox="0 0 10 6"><path d="M1.500 1.200a2 2 0 010 3.600" fill="none" stroke="#9a9a9a" stroke-width="0.900"/><path d="M8.500 1.200a2 2 0 000 3.600" fill="none" stroke="#9a9a9a" stroke-width="0.900"/></svg>
<div class="t" style="top:471.15px;font-size:7.5px;line-height:10.5px;color:#d2d2d2;left:72.8px;">Layer 2</div>
<div class="b " style="left:142.2px;top:474px;width:3px;height:3px;background:#c9c9c9;"></div>
<svg class="b" style="left:58.5px;top:472.5px;" width="10" height="6" viewBox="0 0 10 6"><path d="M1.500 1.200a2 2 0 010 3.600" fill="none" stroke="#9a9a9a" stroke-width="0.900"/><path d="M8.500 1.200a2 2 0 000 3.600" fill="none" stroke="#9a9a9a" stroke-width="0.900"/></svg>
<div class="t" style="top:490.05px;font-size:7.5px;line-height:10.5px;color:#d2d2d2;left:72.8px;">Layer 1</div>
<div class="b " style="left:142.2px;top:492.9px;width:3px;height:3px;background:#c9c9c9;"></div>
<svg class="b" style="left:58.5px;top:491.4px;" width="10" height="6" viewBox="0 0 10 6"><path d="M1.500 1.200a2 2 0 010 3.600" fill="none" stroke="#9a9a9a" stroke-width="0.900"/><path d="M8.500 1.200a2 2 0 000 3.600" fill="none" stroke="#9a9a9a" stroke-width="0.900"/></svg>
<svg class="b" style="left:32px;top:433px;" width="11" height="8" viewBox="0 0 11 8"><path d="M0.600 4C2.400 2 4 1.500 5.600 1.500s3.200 0.500 5 2.500C8.800 6 7.200 6.500 5.600 6.500S2.400 6 0.600 4z" fill="none" stroke="#dedede" stroke-width="0.900"/><circle cx="5.600" cy="4" r="1.500" fill="#e4e4e4"/></svg>
<svg class="b" style="left:46px;top:431px;" width="11" height="11" viewBox="0 0 11 11"><path d="M5.400 6.200V4a1.800 1.800 0 013.600 0v0.600" fill="none" stroke="#cfcfcf" stroke-width="0.900"/><rect x="1.100" y="5.900" width="7.700" height="5.300" rx="1" fill="#e2e2e2"/><rect x="4.400" y="7.200" width="1.100" height="2.200" fill="#1b1b1b"/></svg>
<svg class="b" style="left:32px;top:452.4px;" width="11" height="8" viewBox="0 0 11 8"><path d="M0.600 4C2.400 2 4 1.500 5.600 1.500s3.200 0.500 5 2.500C8.800 6 7.200 6.500 5.600 6.500S2.400 6 0.600 4z" fill="none" stroke="#dedede" stroke-width="0.900"/><circle cx="5.600" cy="4" r="1.500" fill="#e4e4e4"/></svg>
<svg class="b" style="left:46px;top:450.4px;" width="11" height="11" viewBox="0 0 11 11"><path d="M5.400 6.200V4a1.800 1.800 0 013.600 0v0.600" fill="none" stroke="#cfcfcf" stroke-width="0.900"/><rect x="1.100" y="5.900" width="7.700" height="5.300" rx="1" fill="#e2e2e2"/><rect x="4.400" y="7.200" width="1.100" height="2.200" fill="#1b1b1b"/></svg>
<svg class="b" style="left:32px;top:471.5px;" width="11" height="8" viewBox="0 0 11 8"><path d="M0.600 4C2.400 2 4 1.500 5.600 1.500s3.200 0.500 5 2.500C8.800 6 7.200 6.500 5.600 6.500S2.400 6 0.600 4z" fill="none" stroke="#dedede" stroke-width="0.900"/><circle cx="5.600" cy="4" r="1.500" fill="#e4e4e4"/></svg>
<svg class="b" style="left:46px;top:469.5px;" width="11" height="11" viewBox="0 0 11 11"><path d="M5.400 6.200V4a1.800 1.800 0 013.600 0v0.600" fill="none" stroke="#cfcfcf" stroke-width="0.900"/><rect x="1.100" y="5.900" width="7.700" height="5.300" rx="1" fill="#e2e2e2"/><rect x="4.400" y="7.200" width="1.100" height="2.200" fill="#1b1b1b"/></svg>
<svg class="b" style="left:32px;top:490.4px;" width="11" height="8" viewBox="0 0 11 8"><path d="M0.600 4C2.400 2 4 1.500 5.600 1.500s3.200 0.500 5 2.500C8.800 6 7.200 6.500 5.600 6.500S2.400 6 0.600 4z" fill="none" stroke="#dedede" stroke-width="0.900"/><circle cx="5.600" cy="4" r="1.500" fill="#e4e4e4"/></svg>
<svg class="b" style="left:46px;top:488.4px;" width="11" height="11" viewBox="0 0 11 11"><path d="M3 6V3.600a2.400 2.400 0 014.800 0V6" fill="none" stroke="#e6e6e6" stroke-width="1.100"/><rect x="1.600" y="5.400" width="7.600" height="5.400" rx="0.800" fill="#ececec"/><rect x="4.900" y="7" width="1.100" height="2.200" fill="#1b1b1b"/></svg>
<svg class="b" style="left:58.5px;top:431.5px;" width="11" height="10" viewBox="0 0 11 10"><path d="M1 1.200h3.400l1 1.400h4.800v6.600H1z" fill="#e2e2e2"/><path d="M3.400 5l2 2 2.200-2" fill="none" stroke="#1b1b1b" stroke-width="1.100"/></svg>
<div class="b " style="left:643px;top:44px;width:254.8px;height:18.7px;background:#252525;"></div>
<div class="b " style="left:703.1px;top:46px;width:14.8px;height:14.7px;background:#1b1b1b;"></div>
<svg class="b" style="left:703.1px;top:46px;" width="14.8" height="14.7" viewBox="0 0 14.8 14.7"><path d="M5.600 2.700H3.500a1.500 1.500 0 00-1.500 1.500v7.100a1.500 1.500 0 001.500 1.500h2.100M8.500 2.700h2.100a1.500 1.500 0 011.500 1.500v7.100a1.500 1.500 0 01-1.500 1.500H8.500" fill="none" stroke="#9c9c9c" stroke-width="1.200"/><path d="M7.050 2.400v10.700" stroke="#9c9c9c" stroke-width="1.100"/><path d="M2.300 13L12 2.800" stroke="#c8c8c8" stroke-width="1.100"/></svg>
<div class="b " style="left:719.9px;top:46px;width:14.8px;height:14.7px;background:#1b1b1b;"></div>
<svg class="b" style="left:719.9px;top:46px;" width="14.8" height="14.7" viewBox="0 0 14.8 14.7"><path d="M2 6.500V4.200a1.500 1.500 0 011.500-1.500h7.100a1.500 1.500 0 011.500 1.500v2.300M2 9v2.300a1.500 1.500 0 001.500 1.500h7.100a1.500 1.500 0 001.500-1.500V9" fill="none" stroke="#9c9c9c" stroke-width="1.200"/><path d="M1.700 7.750h10.700" stroke="#9c9c9c" stroke-width="1.100"/><path d="M2.300 13L12 2.800" stroke="#c8c8c8" stroke-width="1.100"/></svg>
<div class="b " style="left:736.7px;top:46px;width:14.8px;height:14.7px;background:#1b1b1b;"></div>
<svg class="b" style="left:736.7px;top:46px;" width="14.8" height="14.7" viewBox="0 0 14.8 14.7"><rect x="2" y="2.700" width="10.100" height="10.100" rx="1.500" fill="none" stroke="#9c9c9c" stroke-width="1.200"/><path d="M2.300 13L12 2.800" stroke="#c8c8c8" stroke-width="1.100"/></svg>
<div class="b " style="left:753.7px;top:46px;width:14.8px;height:14.7px;background:#1b1b1b;"></div>
<svg class="b" style="left:753.7px;top:46px;" width="14.8" height="14.7" viewBox="0 0 14.8 14.7"><rect x="2" y="2.700" width="10.100" height="10.100" rx="1.500" fill="none" stroke="#9c9c9c" stroke-width="1.200"/><path d="M2.400 3L12 12.600" stroke="#9c9c9c" stroke-width="1"/><path d="M2.300 13L12 2.800" stroke="#c8c8c8" stroke-width="1.100"/></svg>
<div class="b " style="left:770.5px;top:46px;width:14.8px;height:14.7px;background:#1b1b1b;"></div>
<svg class="b" style="left:770.5px;top:46px;" width="14.8" height="14.7" viewBox="0 0 14.8 14.7"><path d="M5 6l2.500 2.500L10 6" fill="none" stroke="#ececec" stroke-width="1.300"/></svg>
<div class="b " style="left:787.6px;top:46px;width:14.8px;height:14.7px;background:#1b1b1b;"></div>
<svg class="b" style="left:787.6px;top:46px;" width="14.8" height="14.7" viewBox="0 0 14.8 14.7"><path d="M2.400 8.600c0.500-3.600 3.300-3.800 5.200-1.500s4.700 2.200 5.300-1.400" fill="none" stroke="#c8c8c8" stroke-width="1.200"/><path d="M3 13.600L12.400 4.600" stroke="#c8c8c8" stroke-width="1"/></svg>
<div class="b " style="left:804.7px;top:46px;width:14.8px;height:14.7px;background:#1b1b1b;"></div>
<svg class="b" style="left:804.7px;top:46px;" width="14.8" height="14.7" viewBox="0 0 14.8 14.7"><rect x="1.9" y="3" width="3.500" height="3.270" fill="#9c9c9c"/><rect x="1.9" y="6.27" width="3.500" height="3.270" fill="#f4f4f4"/><rect x="1.9" y="9.54" width="3.500" height="3.270" fill="#9c9c9c"/><rect x="5.4" y="3" width="3.500" height="3.270" fill="#f4f4f4"/><rect x="5.4" y="6.27" width="3.500" height="3.270" fill="#858585"/><rect x="5.4" y="9.54" width="3.500" height="3.270" fill="#f4f4f4"/><rect x="8.9" y="3" width="3.500" height="3.270" fill="#9c9c9c"/><rect x="8.9" y="6.27" width="3.500" height="3.270" fill="#f4f4f4"/><rect x="8.9" y="9.54" width="3.500" height="3.270" fill="#9c9c9c"/></svg>
<div class="b " style="left:821.5px;top:46px;width:14.8px;height:14.7px;background:#1b1b1b;"></div>
<svg class="b" style="left:821.5px;top:46px;" width="14.8" height="14.7" viewBox="0 0 14.8 14.7"><rect x="2.800" y="8.300" width="9.700" height="3.600" rx="1.200" fill="#555" stroke="#e4e4e4" stroke-width="1.200"/><path d="M9.800 3v5.600" stroke="#e4e4e4" stroke-width="2"/></svg>
<div class="b " style="left:706.2px;top:68.4px;width:50.1px;height:12.6px;background:#1d1d1d;"></div>
<div class="b " style="left:706.2px;top:68.3px;width:50.1px;height:1px;background:#bcbcbc;"></div>
<div class="b " style="left:757.3px;top:68.9px;width:68.2px;height:12.1px;background:#161616;"></div>
<div class="t" style="top:70.75px;font-size:7.5px;line-height:10.5px;color:#cdcdcd;left:710.9px;">Color Picker</div>
<div class="t" style="top:70.75px;font-size:7.5px;line-height:10.5px;color:#c6c6c6;left:761px;">Reference Images</div>
<svg class="b" style="left:892.5px;top:70.5px;" width="3" height="9" viewBox="0 0 3 9"><circle cx="1.500" cy="1.300" r="0.750" fill="#8a8a8a"/><circle cx="1.500" cy="4.400" r="0.750" fill="#8a8a8a"/><circle cx="1.500" cy="7.500" r="0.750" fill="#8a8a8a"/></svg>
<div class="b " style="left:643px;top:81px;width:254.8px;height:205px;background:#252525;"></div>
<div class="b" style="left:647px;top:86px;width:231.2px;height:164px;background:linear-gradient(to bottom,rgba(0,0,0,0),#000),linear-gradient(to right,#fff,#ff00aa)"></div>
<div class="b" style="left:880px;top:86px;width:13px;height:164px;background:linear-gradient(to bottom,#f00 0%,#ff0 16.66%,#0f0 33.33%,#0ff 50%,#00f 66.66%,#f0f 83.33%,#f00 100%)"></div>
<div class="b " style="left:880px;top:231px;width:13px;height:0.9px;background:#9a9a9a;"></div>
<svg class="b" style="left:731px;top:83px;" width="6" height="6" viewBox="0 0 6 6"><circle cx="3" cy="3" r="1.700" fill="none" stroke="#e8e8e8" stroke-width="0.900"/><circle cx="3" cy="3" r="2.400" fill="none" stroke="#555" stroke-width="0.500"/></svg>
<div class="b " style="left:647.4px;top:252px;width:19.8px;height:14.8px;background:#ff9fdf;box-sizing:border-box;border:0.8px solid #8c8c8c"></div>
<svg class="b" style="left:668.5px;top:255.5px;" width="13" height="7" viewBox="0 0 13 7"><path d="M2.400 3.500h8.200" stroke="#dcdcdc" stroke-width="1"/><path d="M0.800 3.500l2.600-2v4zM12.200 3.500l-2.600-2v4z" fill="#dcdcdc"/></svg>
<div class="b " style="left:683.3px;top:252.4px;width:18.5px;height:13.8px;background:#ffffff;border-radius:1px"></div>
<div class="b " style="left:705px;top:253px;width:5.6px;height:5px;background:#ffbff0;"></div>
<div class="b " style="left:705px;top:260px;width:2.8px;height:6px;background:#000;"></div>
<div class="b " style="left:707.8px;top:260px;width:2.8px;height:6px;background:#fff;"></div>
<div class="b " style="left:714px;top:252px;width:12px;height:14.8px;background:#1b1b1b;"></div>
<svg class="b" style="left:714px;top:252px;" width="12" height="14.8" viewBox="0 0 12 14.8"><ellipse cx="6" cy="8" rx="1.200" ry="2.600" fill="#8c8c8c"/><path d="M6 4.600v2" stroke="#8c8c8c" stroke-width="0.800"/></svg>
<div class="b " style="left:728.4px;top:252px;width:149.8px;height:14.8px;background:#1b1b1b;"></div>
<div class="t" style="top:254.17px;font-size:7.9px;line-height:11.06px;color:#c9c9c9;left:731px;">ff9fdf</div>
<div class="b " style="left:880px;top:252px;width:13px;height:14.8px;background:#1b1b1b;"></div>
<svg class="b" style="left:880px;top:252px;" width="13" height="14.8" viewBox="0 0 13 14.8"><rect x="4" y="5" width="5.600" height="4.800" fill="#9a9a9a"/><path d="M4 6.600h5.600M4 8.200h5.600" stroke="#d6d6d6" stroke-width="0.700"/></svg>
<svg class="b" style="left:650.5px;top:272px;" width="5" height="6.4" viewBox="0 0 5 6.4"><path d="M1.200 1l2.200 2.200-2.200 2.200" fill="none" stroke="#d0d0d0" stroke-width="0.900"/></svg>
<div class="t" style="top:270.75px;font-size:7.5px;line-height:10.5px;color:#d2d2d2;left:657.8px;">Color options</div>
<div class="b " style="left:643px;top:290.8px;width:124.7px;height:133px;background:#252525;"></div>
<div class="b " style="left:646.6px;top:293px;width:117.2px;height:2px;background:#0086cf;"></div>
<div class="t" style="top:297.92px;font-size:8.4px;line-height:11.76px;color:#d2d2d2;left:554.9px;width:300px;text-align:center;">Pencil</div>
<div class="b " style="left:646.6px;top:312px;width:15.2px;height:15.6px;background:#ffffff;border-radius:2px"></div>
<div class="b " style="left:652.5px;top:317.8px;width:3.8px;height:3.8px;background:#000;"></div>
<div class="b " style="left:663px;top:312px;width:100.8px;height:15.6px;background:#1b1b1b;"></div>
<div class="t" style="top:315.35px;font-size:7.5px;line-height:10.5px;color:#d2d2d2;left:563px;width:300px;text-align:center;">Size: 1 px</div>
<svg class="b" style="left:755.5px;top:312.6px;" width="7" height="14.4" viewBox="0 0 7 14.4"><path d="M1.500 4.600L3.500 2.600 5.500 4.600M1.500 9.800L3.500 11.800 5.500 9.800" fill="none" stroke="#dcdcdc" stroke-width="1.050"/></svg>
<div class="b " style="left:646.6px;top:329.7px;width:117.2px;height:10.7px;background:#333333;"></div>
<div class="t" style="top:330.05px;font-size:7.5px;line-height:10.5px;color:#d2d2d2;left:554.8px;width:300px;text-align:center;letter-spacing:-0.15px;">Density: 100 %</div>
<svg class="b" style="left:755.5px;top:329.4px;" width="7" height="10.8" viewBox="0 0 7 10.8"><path d="M1.400 4.300L3.500 2.200 5.600 4.300M1.400 6.700L3.500 8.800 5.600 6.700" fill="none" stroke="#dcdcdc" stroke-width="1.050"/></svg>
<div class="b " style="left:647px;top:344.8px;width:7.2px;height:7.2px;background:#474747;border-radius:1px"></div>
<div class="t" style="top:344.05px;font-size:7.5px;line-height:10.5px;color:#d2d2d2;left:656px;">Overwrite color</div>
<div class="b " style="left:647px;top:359.7px;width:7.2px;height:7.2px;background:#474747;border-radius:1px"></div>
<div class="t" style="top:358.95px;font-size:7.5px;line-height:10.5px;color:#d2d2d2;left:656px;">Fill inside</div>
<div class="b " style="left:647px;top:374.2px;width:7.2px;height:7.2px;background:#474747;border-radius:1px"></div>
<div class="t" style="top:373.45px;font-size:7.5px;line-height:10.5px;color:#d2d2d2;left:656px;">Spacing</div>
<div class="b " style="left:773.2px;top:290.8px;width:124.6px;height:133px;background:#252525;"></div>
<div class="b " style="left:776.6px;top:293px;width:117.2px;height:2px;background:#fd6d14;"></div>
<div class="t" style="top:297.92px;font-size:8.4px;line-height:11.76px;color:#d2d2d2;left:684.8px;width:300px;text-align:center;">Eraser</div>
<div class="b " style="left:776.6px;top:312px;width:15.2px;height:15.6px;background:#ffffff;border-radius:2px"></div>
<div class="b " style="left:782.5px;top:317.8px;width:3.8px;height:3.8px;background:#000;"></div>
<div class="b " style="left:793px;top:312px;width:100.8px;height:15.6px;background:#1b1b1b;"></div>
<div class="t" style="top:315.35px;font-size:7.5px;line-height:10.5px;color:#d2d2d2;left:693px;width:300px;text-align:center;">Size: 1 px</div>
<svg class="b" style="left:885.5px;top:312.6px;" width="7" height="14.4" viewBox="0 0 7 14.4"><path d="M1.500 4.600L3.500 2.600 5.500 4.600M1.500 9.800L3.500 11.800 5.500 9.800" fill="none" stroke="#dcdcdc" stroke-width="1.050"/></svg>
<div class="b " style="left:776.6px;top:329.7px;width:117.2px;height:10.7px;background:#333333;"></div>
<div class="t" style="top:330.05px;font-size:7.5px;line-height:10.5px;color:#d2d2d2;left:684.5px;width:300px;text-align:center;letter-spacing:-0.15px;">Density: 100 %</div>
<svg class="b" style="left:885.5px;top:329.4px;" width="7" height="10.8" viewBox="0 0 7 10.8"><path d="M1.400 4.300L3.500 2.200 5.600 4.300M1.400 6.700L3.500 8.800 5.600 6.700" fill="none" stroke="#dcdcdc" stroke-width="1.050"/></svg>
<div class="b " style="left:776.6px;top:342.4px;width:117.2px;height:10.9px;background:#333333;"></div>
<div class="t" style="top:343.25px;font-size:7.5px;line-height:10.5px;color:#d2d2d2;left:684.8px;width:300px;text-align:center;">Opacity: 255</div>
<svg class="b" style="left:885.5px;top:342.7px;" width="7" height="10.8" viewBox="0 0 7 10.8"><path d="M1.400 4.300L3.500 2.200 5.600 4.300M1.400 6.700L3.500 8.800 5.600 6.700" fill="none" stroke="#dcdcdc" stroke-width="1.050"/></svg>
<div class="b " style="left:643px;top:429.4px;width:254.8px;height:76px;background:#252525;"></div>
<div class="b " style="left:646px;top:431px;width:11px;height:12px;background:#1b1b1b;"></div>
<svg class="b" style="left:646px;top:431px;" width="11" height="12" viewBox="0 0 11 12"><path d="M5.500 2.600v6.800M2.100 6h6.800" stroke="#8a8a8a" stroke-width="1"/></svg>
<div class="b " style="left:659px;top:431px;width:11.5px;height:12px;background:#1b1b1b;"></div>
<svg class="b" style="left:659px;top:431px;" width="11.5" height="12" viewBox="0 0 11.5 12"><path d="M2.400 6h6.800" stroke="#e0e0e0" stroke-width="1.100"/></svg>
<div class="b " style="left:672px;top:431px;width:12px;height:12px;background:#1b1b1b;"></div>
<svg class="b" style="left:672px;top:431px;" width="12" height="12" viewBox="0 0 12 12"><path d="M6 2.600v6.400M3.400 6.600L6 9.400l2.600-2.800" fill="none" stroke="#e8e8e8" stroke-width="1.200"/></svg>
<div class="b " style="left:685px;top:430.6px;width:13px;height:13.4px;background:#2a2a2a;box-sizing:border-box;border:0.9px solid #b0b0b0;border-radius:1.5px"></div>
<svg class="b" style="left:685px;top:430.6px;" width="13" height="13.4" viewBox="0 0 13 13.4"><path d="M4.600 6.400V4.800a1.900 1.900 0 013.800 0v1.600" fill="none" stroke="#e8e8e8" stroke-width="1.100"/><rect x="3.400" y="6.200" width="6.200" height="4.800" rx="0.700" fill="#ececec"/><rect x="6" y="7.600" width="1" height="2" fill="#222"/></svg>
<div class="b " style="left:699.5px;top:431px;width:169.3px;height:12px;background:#1b1b1b;"></div>
<div class="t" style="top:432.85px;font-size:7.5px;line-height:10.5px;color:#d2d2d2;left:630.2px;width:300px;text-align:center;">Pixelorama</div>
<svg class="b" style="left:861px;top:434px;" width="7" height="6" viewBox="0 0 7 6"><path d="M1.4 2L3.5 4.1 5.6 2" fill="none" stroke="#e0e0e0" stroke-width="1"/></svg>
<div class="b " style="left:870.8px;top:431px;width:11.4px;height:12px;background:#1b1b1b;"></div>
<svg class="b" style="left:871.3px;top:431.6px;" width="11.4" height="11.4" viewBox="0 0 11.4 11.4"><path d="M5.700 1C2.900 1 1 3 1 5.600s2 4.600 4.600 4.600c1 0 1.200-0.700 0.800-1.400-0.500-0.900 0-1.800 1.200-1.800h1.200c1.100 0 1.800-0.800 1.800-1.900C10.600 2.700 8.400 1 5.700 1z" fill="#c6c6c6"/><circle cx="3.200" cy="5.400" r="0.800" fill="#252525"/><circle cx="4.400" cy="3.200" r="0.800" fill="#252525"/><circle cx="7" cy="3" r="0.800" fill="#252525"/><path d="M7 9.800l3-3" stroke="#e6e6e6" stroke-width="1.100"/></svg>
<div class="b " style="left:883.8px;top:431px;width:11.4px;height:12px;background:#1b1b1b;"></div>
<svg class="b" style="left:884.3px;top:431.6px;" width="11.4" height="11.4" viewBox="0 0 11.4 11.4"><path d="M5.700 1C2.900 1 1 3 1 5.600s2 4.600 4.600 4.600c1 0 1.200-0.700 0.800-1.400-0.500-0.900 0-1.800 1.200-1.800h1.200c1.100 0 1.800-0.800 1.800-1.900C10.600 2.700 8.400 1 5.700 1z" fill="#c6c6c6"/><circle cx="3.200" cy="5.400" r="0.800" fill="#252525"/><circle cx="4.400" cy="3.200" r="0.800" fill="#252525"/><circle cx="7" cy="3" r="0.800" fill="#252525"/><path d="M8.200 7v3.400M6.500 8.700h3.400" stroke="#e6e6e6" stroke-width="1"/></svg>
<svg class="b" style="left:643px;top:429.5px;" width="254.8" height="75.5" viewBox="0 0 254.8 75.5"><rect x="3.70" y="19.70" width="12.3" height="12.3" fill="#ffffd9"/><rect x="17.30" y="19.70" width="12.3" height="12.3" fill="#e5d0a0"/><rect x="30.90" y="19.70" width="12.3" height="12.3" fill="#cdaa88"/><rect x="44.50" y="19.70" width="12.3" height="12.3" fill="#b38d7a"/><rect x="58.10" y="19.70" width="12.3" height="12.3" fill="#9c776a"/><rect x="71.70" y="19.70" width="12.3" height="12.3" fill="#84625f"/><rect x="85.30" y="19.70" width="12.3" height="12.3" fill="#6f4f58"/><rect x="98.90" y="19.70" width="12.3" height="12.3" fill="#5c4251"/><rect x="112.50" y="19.70" width="12.3" height="12.3" fill="#51394b"/><rect x="126.10" y="19.70" width="12.3" height="12.3" fill="#452a40"/><rect x="139.70" y="19.70" width="12.3" height="12.3" fill="#381f38"/><rect x="153.30" y="19.70" width="12.3" height="12.3" fill="#2b172e"/><rect x="3.70" y="33.32" width="12.3" height="12.3" fill="#fc8a7b"/><rect x="17.30" y="33.32" width="12.3" height="12.3" fill="#fa6e58"/><rect x="30.90" y="33.32" width="12.3" height="12.3" fill="#f8555f"/><rect x="44.50" y="33.32" width="12.3" height="12.3" fill="#ee3a6b"/><rect x="58.10" y="33.32" width="12.3" height="12.3" fill="#d63a88"/><rect x="71.70" y="33.32" width="12.3" height="12.3" fill="#b53394"/><rect x="85.30" y="33.32" width="12.3" height="12.3" fill="#9e2fae"/><rect x="98.90" y="33.32" width="12.3" height="12.3" fill="#7b2fad"/><rect x="112.50" y="33.32" width="12.3" height="12.3" fill="#5e2ba3"/><rect x="126.10" y="33.32" width="12.3" height="12.3" fill="#3d1f80"/><rect x="139.70" y="33.32" width="12.3" height="12.3" fill="#33186c"/><rect x="153.30" y="33.32" width="12.3" height="12.3" fill="#29175a"/><rect x="3.70" y="46.94" width="12.3" height="12.3" fill="#fff066"/><rect x="17.30" y="46.94" width="12.3" height="12.3" fill="#fbec1c"/><rect x="30.90" y="46.94" width="12.3" height="12.3" fill="#fbc417"/><rect x="44.50" y="46.94" width="12.3" height="12.3" fill="#f6a124"/><rect x="58.10" y="46.94" width="12.3" height="12.3" fill="#f6831f"/><rect x="71.70" y="46.94" width="12.3" height="12.3" fill="#f05a22"/><rect x="85.30" y="46.94" width="12.3" height="12.3" fill="#f14d1c"/><rect x="98.90" y="46.94" width="12.3" height="12.3" fill="#ed1c24"/><rect x="112.50" y="46.94" width="12.3" height="12.3" fill="#c2173d"/><rect x="126.10" y="46.94" width="12.3" height="12.3" fill="#8c1447"/><rect x="139.70" y="46.94" width="12.3" height="12.3" fill="#5e0f48"/><rect x="153.30" y="46.94" width="12.3" height="12.3" fill="#2d0a30"/><rect x="3.70" y="60.56" width="12.3" height="12.3" fill="#b9fa7a"/><rect x="17.30" y="60.56" width="12.3" height="12.3" fill="#8de848"/><rect x="30.90" y="60.56" width="12.3" height="12.3" fill="#52e04d"/><rect x="44.50" y="60.56" width="12.3" height="12.3" fill="#25c756"/><rect x="58.10" y="60.56" width="12.3" height="12.3" fill="#1db556"/><rect x="71.70" y="60.56" width="12.3" height="12.3" fill="#1ba56a"/><rect x="85.30" y="60.56" width="12.3" height="12.3" fill="#16897e"/><rect x="98.90" y="60.56" width="12.3" height="12.3" fill="#146c7e"/><rect x="112.50" y="60.56" width="12.3" height="12.3" fill="#1a4e7b"/><rect x="126.10" y="60.56" width="12.3" height="12.3" fill="#22347c"/><rect x="139.70" y="60.56" width="12.3" height="12.3" fill="#2a2168"/><rect x="153.30" y="60.56" width="12.3" height="12.3" fill="#28164d"/><rect x="3.70" y="74.18" width="12.3" height="12.3" fill="#5bc88c"/><rect x="17.30" y="74.18" width="12.3" height="12.3" fill="#2f9a6c"/><rect x="30.90" y="74.18" width="12.3" height="12.3" fill="#1f7a6a"/><rect x="44.50" y="74.18" width="12.3" height="12.3" fill="#1a6470"/><rect x="58.10" y="74.18" width="12.3" height="12.3" fill="#1a5070"/><rect x="71.70" y="74.18" width="12.3" height="12.3" fill="#1c3d6a"/><rect x="85.30" y="74.18" width="12.3" height="12.3" fill="#20306a"/><rect x="98.90" y="74.18" width="12.3" height="12.3" fill="#241f5a"/><rect x="112.50" y="74.18" width="12.3" height="12.3" fill="#1f1848"/><rect x="126.10" y="74.18" width="12.3" height="12.3" fill="#1a1238"/><rect x="139.70" y="74.18" width="12.3" height="12.3" fill="#150e2c"/><rect x="153.30" y="74.18" width="12.3" height="12.3" fill="#120a22"/></svg>
<div class="b " style="left:890px;top:449.6px;width:3px;height:46px;background:#3c3c3c;border-radius:1.5px"></div>
</body></html>
